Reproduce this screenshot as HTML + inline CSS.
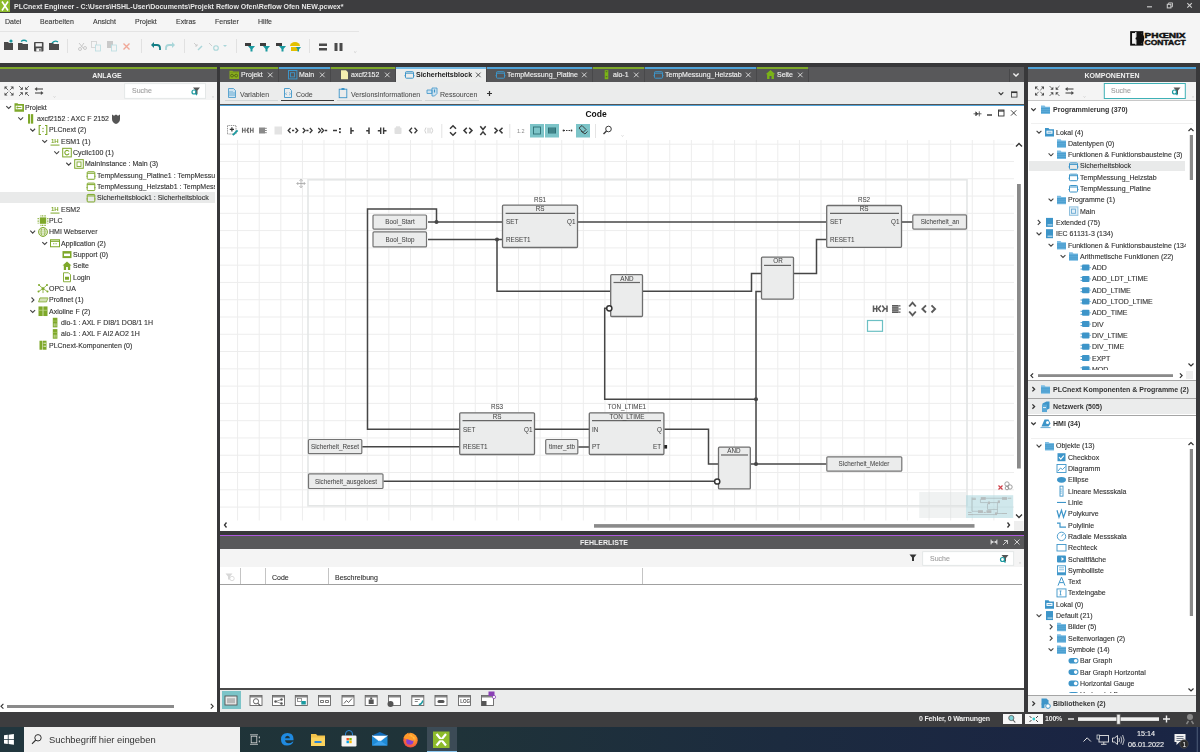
<!DOCTYPE html>
<html><head><meta charset="utf-8"><title>PLCnext Engineer</title>
<style>
html,body{margin:0;padding:0;}
body{width:1200px;height:752px;overflow:hidden;position:relative;background:#38383a;font-family:"Liberation Sans", sans-serif;}
.r{position:absolute;}
.t{position:absolute;white-space:nowrap;line-height:20px;height:20px;font-family:"Liberation Sans", sans-serif;will-change:transform;}
svg.r{overflow:visible;}
</style></head><body>

<div class="r" style="left:0px;top:0px;width:1200px;height:12.7px;background:#3d3d3f;"></div>
<svg class="r" style="left:0px;top:0px;" width="10" height="12" viewBox="0 0 10 12"><rect width="10" height="12" fill="#8dbb2b"/><path d="M2 1.5 L8 10.5 M8 1.5 L2 10.5" stroke="#fff" stroke-width="1.6"/><rect x="0" y="5" width="10" height="2" fill="#fff" opacity="0"/></svg>
<div class="t" style="left:14px;top:-3.20px;font-weight:bold;font-size:7px;color:#e6e6e6;">PLCnext Engineer - C:\Users\HSHL-User\Documents\Projekt Reflow Ofen\Reflow Ofen NEW.pcwex*</div>
<svg class="r" style="left:1140px;top:0px;" width="60" height="12" viewBox="0 0 60 12"><path d="M7 6.8h5" stroke="#c8c8c8" stroke-width="1.2"/><rect x="27.3" y="4.3" width="3.6" height="3.6" fill="none" stroke="#c8c8c8" stroke-width="1.1"/><path d="M28.6 4.3v-1.4h3.9v3.9h-1.5" fill="none" stroke="#c8c8c8" stroke-width="0.9"/><path d="M47.3 3.2l4.5 4.5M51.8 3.2l-4.5 4.5" stroke="#d0d0d0" stroke-width="1.1"/></svg>
<div class="r" style="left:0px;top:12.7px;width:1200px;height:50.8px;background:#f5f5f5;"></div>
<div class="r" style="left:0px;top:30.5px;width:359px;height:1px;background:#e4e4e4;"></div>
<div class="t" style="left:4.5px;top:11.90px;font-weight:normal;font-size:7px;color:#3a3a3a;-webkit-text-stroke:0.12px #3a3a3a;">Datei</div>
<div class="t" style="left:40px;top:11.90px;font-weight:normal;font-size:7px;color:#3a3a3a;-webkit-text-stroke:0.12px #3a3a3a;">Bearbeiten</div>
<div class="t" style="left:93px;top:11.90px;font-weight:normal;font-size:7px;color:#3a3a3a;-webkit-text-stroke:0.12px #3a3a3a;">Ansicht</div>
<div class="t" style="left:135px;top:11.90px;font-weight:normal;font-size:7px;color:#3a3a3a;-webkit-text-stroke:0.12px #3a3a3a;">Projekt</div>
<div class="t" style="left:176px;top:11.90px;font-weight:normal;font-size:7px;color:#3a3a3a;-webkit-text-stroke:0.12px #3a3a3a;">Extras</div>
<div class="t" style="left:215px;top:11.90px;font-weight:normal;font-size:7px;color:#3a3a3a;-webkit-text-stroke:0.12px #3a3a3a;">Fenster</div>
<div class="t" style="left:258px;top:11.90px;font-weight:normal;font-size:7px;color:#3a3a3a;-webkit-text-stroke:0.12px #3a3a3a;">Hilfe</div>
<svg class="r" style="left:0px;top:0px;" width="400" height="62" viewBox="0 0 400 62"><path d="M4 42h4l1 1h4v7h-9z" fill="#4a4a4a"/><circle cx="11" cy="41" r="1.6" fill="#1a9aa0"/><path d="M18 43h4l1 1h5v6h-10z" fill="#4a4a4a"/><path d="M21 41.5q3-2.5 6 0" fill="none" stroke="#1a9aa0" stroke-width="1.3"/><rect x="34" y="42" width="9.5" height="9.5" rx="0.8" fill="#4a4a4a"/><rect x="35.6" y="43.2" width="6.3" height="3.3" fill="#f4f4f4"/><rect x="36.3" y="48.3" width="5" height="3.2" fill="#f4f4f4"/><rect x="39.3" y="48.9" width="1.3" height="2" fill="#4a4a4a"/><path d="M49 43h4l1 1h5v6h-10z" fill="#4a4a4a"/><path d="M52 43q3-3 6-1" fill="none" stroke="#1a9aa0" stroke-width="1.3"/><rect x="67" y="39" width="0.8" height="14" fill="#dcdcdc"/><path d="M79 43l5 6M84 43l-3 4" stroke="#c8c8c8" stroke-width="1"/><circle cx="80" cy="49" r="1.5" fill="none" stroke="#c8c8c8"/><circle cx="85" cy="48" r="1.5" fill="none" stroke="#c8c8c8"/><rect x="91.5" y="41.5" width="5" height="6" fill="none" stroke="#d0d0d0" stroke-width="0.8"/><rect x="95.5" y="45" width="5" height="6" fill="#f4f4f4" stroke="#b8dde0" stroke-width="0.8"/><rect x="107" y="41" width="6" height="7" fill="#c9c9c9"/><rect x="111.5" y="45" width="5" height="6" fill="#f4f4f4" stroke="#b8dde0" stroke-width="0.8"/><path d="M123.5 43.5l6 6M129.5 43.5l-6 6" stroke="#f0a898" stroke-width="1.4"/><rect x="141" y="39" width="0.8" height="14" fill="#dcdcdc"/><path d="M153 45h4q3 0 3 3v2" fill="none" stroke="#137f86" stroke-width="1.8"/><path d="M151 45l3-3v6z" fill="#137f86"/><path d="M173 45h-4q-3 0-3 3v2" fill="none" stroke="#a9d6d9" stroke-width="1.8"/><path d="M175 45l-3-3v6z" fill="#a9d6d9"/><rect x="184" y="39" width="0.8" height="14" fill="#dcdcdc"/><path d="M194 43l3 3M195 46h2v-2" stroke="#c4c4c4" stroke-width="0.8" fill="none"/><path d="M198 50l4-4" stroke="#a9d6d9" stroke-width="1.4"/><path d="M209 43l3 3" stroke="#c4c4c4" stroke-width="0.8"/><circle cx="216" cy="48" r="2.3" fill="none" stroke="#a9d6d9" stroke-width="1.1"/><path d="M223 45l2 2 2-2z" fill="#a9d6d9"/><rect x="236" y="39" width="0.8" height="14" fill="#dcdcdc"/><rect x="245" y="43" width="6" height="3" fill="#3d3d3d"/><path d="M248 46h7l-2.5 3v2.5h-2v-2.5z" fill="#1a9aa0"/><rect x="260" y="43" width="6" height="3" fill="#3d3d3d"/><path d="M263 46h7l-2.5 3v2.5h-2v-2.5z" fill="#1a9aa0"/><rect x="276" y="43" width="6" height="3" fill="#3d3d3d"/><path d="M279 46h7l-2.5 3v2.5h-2v-2.5z" fill="#1a9aa0"/><path d="M290 46a5 4 0 0 1 10 0z" fill="#e3c000"/><rect x="291" y="47" width="7" height="4" fill="#e3c000"/><path d="M296 47h5l-2 2.5v2h-1.5v-2z" fill="#1a9aa0"/><rect x="309" y="39" width="0.8" height="14" fill="#dcdcdc"/><rect x="319" y="43.5" width="8" height="2.5" fill="#4a4a4a"/><rect x="319" y="48" width="8" height="2.5" fill="#4a4a4a"/><rect x="334.5" y="43" width="3" height="8" fill="#4a4a4a"/><rect x="339.5" y="43" width="3" height="8" fill="#4a4a4a"/><path d="M354 51.5l1.2 1 1.2-1" stroke="#bbb" stroke-width="0.6" fill="none"/></svg>
<svg class="r" style="left:1130px;top:30px;" width="58" height="16" viewBox="0 0 58 16"><rect x="1.1" y="2.1" width="11.3" height="12.6" fill="none" stroke="#111" stroke-width="1.9"/><path d="M5.5 2.1h2.5a5 5 0 0 1 0 12.6h-2.5z" fill="#111"/><rect x="5.2" y="2" width="1.2" height="12.6" fill="#fff"/><circle cx="6.8" cy="8.4" r="1.2" fill="#111"/><text x="14.6" y="7.6" font-family="Liberation Sans" font-weight="bold" font-size="7.4" fill="#111" stroke="#111" stroke-width="0.45" textLength="41" lengthAdjust="spacingAndGlyphs">PHŒNIX</text><text x="14.6" y="14.5" font-family="Liberation Sans" font-weight="bold" font-size="7.4" fill="#111" stroke="#111" stroke-width="0.45" textLength="41" lengthAdjust="spacingAndGlyphs">CONTACT</text></svg>
<div class="r" style="left:0px;top:67px;width:217px;height:2px;background:#7fa82a;"></div>
<div class="r" style="left:0px;top:69px;width:217px;height:13px;background:#58585a;"></div>
<div class="t" style="left:-93.5px;width:400px;text-align:center;top:65.80px;font-weight:bold;font-size:7px;color:#f0f0f0;">ANLAGE</div>
<div class="r" style="left:0px;top:82px;width:217px;height:18px;background:#f4f4f4;"></div>
<svg class="r" style="left:0px;top:82px;" width="217" height="18" viewBox="0 0 217 18"><path d="M4.5 4.5h3l-3 3z" fill="#4a4a4a"/><path d="M5.5 5.5L8.2 8.2" stroke="#4a4a4a" stroke-width="0.8"/><path d="M4.5 13.5h3l-3 -3z" fill="#4a4a4a"/><path d="M5.5 12.5L8.2 9.8" stroke="#4a4a4a" stroke-width="0.8"/><path d="M13.5 4.5h-3l3 3z" fill="#4a4a4a"/><path d="M12.5 5.5L9.8 8.2" stroke="#4a4a4a" stroke-width="0.8"/><path d="M13.5 13.5h-3l3 -3z" fill="#4a4a4a"/><path d="M12.5 12.5L9.8 9.8" stroke="#4a4a4a" stroke-width="0.8"/><path d="M22.8 7.8h-3l3 -3z" fill="#4a4a4a"/><path d="M21.8 6.8L19 4" stroke="#4a4a4a" stroke-width="0.8"/><path d="M22.8 10.2h-3l3 3z" fill="#4a4a4a"/><path d="M21.8 11.2L19 14" stroke="#4a4a4a" stroke-width="0.8"/><path d="M25.2 7.8h3l-3 -3z" fill="#4a4a4a"/><path d="M26.2 6.8L29 4" stroke="#4a4a4a" stroke-width="0.8"/><path d="M25.2 10.2h3l-3 3z" fill="#4a4a4a"/><path d="M26.2 11.2L29 14" stroke="#4a4a4a" stroke-width="0.8"/><path d="M34.5 7l2.6-2v4z" fill="#4a4a4a"/><path d="M36.5 7h6.5" stroke="#4a4a4a" stroke-width="1.1"/><path d="M43.5 11l-2.6-2v4z" fill="#4a4a4a"/><path d="M41.5 11h-6.5" stroke="#4a4a4a" stroke-width="1.1"/><rect x="124.7" y="1.7" width="80.9" height="14.6" fill="#fff" stroke="#dfe3e3" stroke-width="0.8"/><path d="M193 5.5h7l-2.5 3v3.5h-2v-3.5z" fill="#555"/><circle cx="194" cy="10" r="2" fill="none" stroke="#1a9aa0" stroke-width="1.2"/><path d="M195.4 11.4l1.6 1.6" stroke="#1a9aa0" stroke-width="1.3"/><path d="M53.5 14.5l1 .8 1-.8" stroke="#bbb" stroke-width="0.6" fill="none"/><path d="M212 14.5l1 .8 1-.8" stroke="#bbb" stroke-width="0.6" fill="none"/></svg>
<div class="t" style="left:131.5px;top:81.10px;font-weight:normal;font-size:7px;color:#a0a0a0;-webkit-text-stroke:0.12px #a0a0a0;">Suche</div>
<div class="r" style="left:0px;top:100px;width:217px;height:612px;background:#ffffff;"></div>
<div class="r" style="left:0px;top:191.5px;width:215px;height:11.5px;background:#e9eaea;"></div>
<div class="t" style="left:25px;top:97.80px;font-weight:normal;font-size:7px;color:#333;max-width:190px;overflow:hidden;-webkit-text-stroke:0.12px #333;">Projekt</div>
<div class="t" style="left:37px;top:109.13px;font-weight:normal;font-size:7px;color:#333;max-width:178px;overflow:hidden;-webkit-text-stroke:0.12px #333;">axcf2152 : AXC F 2152</div>
<div class="t" style="left:49px;top:120.46px;font-weight:normal;font-size:7px;color:#333;max-width:166px;overflow:hidden;-webkit-text-stroke:0.12px #333;">PLCnext (2)</div>
<div class="t" style="left:61px;top:131.79px;font-weight:normal;font-size:7px;color:#333;max-width:154px;overflow:hidden;-webkit-text-stroke:0.12px #333;">ESM1 (1)</div>
<div class="t" style="left:73px;top:143.12px;font-weight:normal;font-size:7px;color:#333;max-width:142px;overflow:hidden;-webkit-text-stroke:0.12px #333;">Cyclic100 (1)</div>
<div class="t" style="left:85px;top:154.45px;font-weight:normal;font-size:7px;color:#333;max-width:130px;overflow:hidden;-webkit-text-stroke:0.12px #333;">MainInstance : Main (3)</div>
<div class="t" style="left:97px;top:165.78px;font-weight:normal;font-size:7px;color:#333;max-width:118px;overflow:hidden;-webkit-text-stroke:0.12px #333;">TempMessung_Platine1 : TempMessung_Platine</div>
<div class="t" style="left:97px;top:177.11px;font-weight:normal;font-size:7px;color:#333;max-width:118px;overflow:hidden;-webkit-text-stroke:0.12px #333;">TempMessung_Heizstab1 : TempMessung_Heizstab</div>
<div class="t" style="left:97px;top:188.44px;font-weight:normal;font-size:7px;color:#333;max-width:118px;overflow:hidden;-webkit-text-stroke:0.12px #333;">Sicherheitsblock1 : Sicherheitsblock</div>
<div class="t" style="left:61px;top:199.77px;font-weight:normal;font-size:7px;color:#333;max-width:154px;overflow:hidden;-webkit-text-stroke:0.12px #333;">ESM2</div>
<div class="t" style="left:49px;top:211.10px;font-weight:normal;font-size:7px;color:#333;max-width:166px;overflow:hidden;-webkit-text-stroke:0.12px #333;">PLC</div>
<div class="t" style="left:49px;top:222.43px;font-weight:normal;font-size:7px;color:#333;max-width:166px;overflow:hidden;-webkit-text-stroke:0.12px #333;">HMI Webserver</div>
<div class="t" style="left:61px;top:233.76px;font-weight:normal;font-size:7px;color:#333;max-width:154px;overflow:hidden;-webkit-text-stroke:0.12px #333;">Application (2)</div>
<div class="t" style="left:73px;top:245.09px;font-weight:normal;font-size:7px;color:#333;max-width:142px;overflow:hidden;-webkit-text-stroke:0.12px #333;">Support (0)</div>
<div class="t" style="left:73px;top:256.42px;font-weight:normal;font-size:7px;color:#333;max-width:142px;overflow:hidden;-webkit-text-stroke:0.12px #333;">Seite</div>
<div class="t" style="left:73px;top:267.75px;font-weight:normal;font-size:7px;color:#333;max-width:142px;overflow:hidden;-webkit-text-stroke:0.12px #333;">Login</div>
<div class="t" style="left:49px;top:279.08px;font-weight:normal;font-size:7px;color:#333;max-width:166px;overflow:hidden;-webkit-text-stroke:0.12px #333;">OPC UA</div>
<div class="t" style="left:49px;top:290.41px;font-weight:normal;font-size:7px;color:#333;max-width:166px;overflow:hidden;-webkit-text-stroke:0.12px #333;">Profinet (1)</div>
<div class="t" style="left:49px;top:301.74px;font-weight:normal;font-size:7px;color:#333;max-width:166px;overflow:hidden;-webkit-text-stroke:0.12px #333;">Axioline F (2)</div>
<div class="t" style="left:61px;top:313.07px;font-weight:normal;font-size:7px;color:#333;max-width:154px;overflow:hidden;-webkit-text-stroke:0.12px #333;">dio-1 : AXL F DI8/1 DO8/1 1H</div>
<div class="t" style="left:61px;top:324.40px;font-weight:normal;font-size:7px;color:#333;max-width:154px;overflow:hidden;-webkit-text-stroke:0.12px #333;">aio-1 : AXL F AI2 AO2 1H</div>
<div class="t" style="left:49px;top:335.73px;font-weight:normal;font-size:7px;color:#333;max-width:166px;overflow:hidden;-webkit-text-stroke:0.12px #333;">PLCnext-Komponenten (0)</div>
<svg class="r" style="left:0px;top:0px;" width="217" height="712" viewBox="0 0 217 712"><path d="M6.299999999999999 106.1l2.4 2.4l2.4 -2.4" fill="none" stroke="#444" stroke-width="1.1"/><path d="M14.5 103.3h3l.8 .8h5.7v7.6h-9.5z" fill="#7ea82a"/><rect x="15.7" y="105.7" width="6.6" height="3.6" fill="#fff"/><circle cx="17.4" cy="107.5" r="1" fill="#7ea82a"/><path d="M18 107.5h3.4" stroke="#7ea82a" stroke-width="0.9"/><path d="M18.3 117.42999999999999l2.4 2.4l2.4 -2.4" fill="none" stroke="#444" stroke-width="1.1"/><rect x="28" y="114.13" width="2.2" height="9.5" fill="#7ea82a"/><rect x="31" y="114.13" width="2.2" height="9.5" fill="#7ea82a"/><path d="M30.300000000000004 128.76000000000002l2.4 2.4l2.4 -2.4" fill="none" stroke="#444" stroke-width="1.1"/><path d="M41 125.46000000000001h-1.8v9h1.8M45 125.46000000000001h1.8v9h-1.8" fill="none" stroke="#7ea82a" stroke-width="1.1"/><circle cx="43" cy="128.46" r="0.7" fill="#7ea82a"/><circle cx="43" cy="131.46" r="0.7" fill="#7ea82a"/><path d="M42.300000000000004 140.09l2.4 2.4l2.4 -2.4" fill="none" stroke="#444" stroke-width="1.1"/><text x="51" y="143.29" font-family="Liberation Sans" font-size="6" font-weight="bold" fill="#7ea82a">1H</text><path d="M50.5 145.09h9" stroke="#7ea82a" stroke-width="1"/><path d="M54.300000000000004 151.42000000000002l2.4 2.4l2.4 -2.4" fill="none" stroke="#444" stroke-width="1.1"/><rect x="62.7" y="148.32" width="8.6" height="8.6" fill="none" stroke="#7ea82a" stroke-width="1"/><path d="M69 151.62a2.2 2.2 0 1 0 0 2" fill="none" stroke="#7ea82a" stroke-width="1.1"/><path d="M66.3 162.75l2.4 2.4l2.4 -2.4" fill="none" stroke="#444" stroke-width="1.1"/><rect x="74.7" y="159.64999999999998" width="8.6" height="8.6" fill="none" stroke="#7ea82a" stroke-width="1"/><rect x="77" y="161.95" width="4" height="4.5" fill="none" stroke="#7ea82a" stroke-width="0.9"/><rect x="87.2" y="171.78" width="7.6" height="7.5" rx="0.8" fill="none" stroke="#7ea82a" stroke-width="1"/><path d="M87.2 173.28h7.6" stroke="#7ea82a" stroke-width="1"/><path d="M86.5 176.28h1M94.5 176.28h1" stroke="#7ea82a" stroke-width="1"/><rect x="87.2" y="183.11" width="7.6" height="7.5" rx="0.8" fill="none" stroke="#7ea82a" stroke-width="1"/><path d="M87.2 184.61h7.6" stroke="#7ea82a" stroke-width="1"/><path d="M86.5 187.61h1M94.5 187.61h1" stroke="#7ea82a" stroke-width="1"/><rect x="87.2" y="194.44" width="7.6" height="7.5" rx="0.8" fill="none" stroke="#7ea82a" stroke-width="1"/><path d="M87.2 195.94h7.6" stroke="#7ea82a" stroke-width="1"/><path d="M86.5 198.94h1M94.5 198.94h1" stroke="#7ea82a" stroke-width="1"/><text x="51" y="211.26999999999998" font-family="Liberation Sans" font-size="6" font-weight="bold" fill="#7ea82a">1H</text><path d="M50.5 213.07h9" stroke="#7ea82a" stroke-width="1"/><rect x="39.8" y="217.4" width="6.4" height="6.4" fill="#7ea82a"/><path d="M38.2 218.1v5.5M47.8 218.1v5.5M40.5 215.79999999999998h5.5M40.5 225.4h5.5" stroke="#7ea82a" stroke-width="1.2" stroke-dasharray="0.9 0.7"/><path d="M30.300000000000004 230.73000000000002l2.4 2.4l2.4 -2.4" fill="none" stroke="#444" stroke-width="1.1"/><circle cx="43" cy="231.93" r="4.5" fill="none" stroke="#7ea82a" stroke-width="0.9"/><ellipse cx="43" cy="231.93" rx="2" ry="4.5" fill="none" stroke="#7ea82a" stroke-width="0.7"/><path d="M38.5 231.93h9M39 229.93h8M39 233.93h8" stroke="#7ea82a" stroke-width="0.6"/><path d="M42.300000000000004 242.06l2.4 2.4l2.4 -2.4" fill="none" stroke="#444" stroke-width="1.1"/><rect x="50.5" y="239.76" width="9" height="7" fill="none" stroke="#7ea82a" stroke-width="1"/><path d="M50.5 241.26h9" stroke="#7ea82a" stroke-width="1.2"/><path d="M53 243.76h4" stroke="#7ea82a" stroke-width="0.8" stroke-dasharray="1 0.6"/><rect x="62.5" y="251.08999999999997" width="9" height="7" fill="#7ea82a"/><rect x="64" y="253.58999999999997" width="6" height="2.5" fill="#fff"/><path d="M67 261.42l4.5 4h-1.3v4.5h-2.3v-3h-1.8v3h-2.3v-4.5h-1.3z" fill="#7ea82a"/><path d="M63.5 272.75h5l2 2v7h-7z" fill="none" stroke="#7ea82a" stroke-width="0.9"/><rect x="65" y="276.75" width="4" height="3" fill="#7ea82a"/><circle cx="43" cy="288.58" r="1.4" fill="#7ea82a"/><path d="M43 288.58l-4 -3.5M43 288.58l4 -3.5M43 288.58l-4.5 3M43 288.58l4.5 3M43 288.58v4.5" stroke="#7ea82a" stroke-width="0.8"/><circle cx="39" cy="285.08" r="1" fill="#7ea82a"/><circle cx="47" cy="285.08" r="1" fill="#7ea82a"/><circle cx="38.5" cy="291.58" r="1" fill="#7ea82a"/><circle cx="47.5" cy="291.58" r="1" fill="#7ea82a"/><path d="M31.500000000000004 297.51000000000005l2.4 2.4l-2.4 2.4" fill="none" stroke="#444" stroke-width="1.1"/><path d="M38.5 301.91l1.5 -4h8l-1.5 4z" fill="none" stroke="#7ea82a" stroke-width="0.8"/><path d="M40 297.91v4M42 297.91v4M44 297.91v4M46 297.91v4" stroke="#7ea82a" stroke-width="0.7"/><path d="M30.300000000000004 310.04l2.4 2.4l2.4 -2.4" fill="none" stroke="#444" stroke-width="1.1"/><rect x="38.5" y="306.44" width="4.2" height="9.6" fill="#7ea82a"/><rect x="43.3" y="306.44" width="4.2" height="9.6" fill="#7ea82a"/><path d="M38.5 310.24h9" stroke="#c5dc8c" stroke-width="0.7"/><rect x="52.8" y="317.77" width="4.6" height="9.6" fill="#7ea82a"/><path d="M54.2 323.37v3M56 323.37v3" stroke="#fff" stroke-width="0.6"/><path d="M52.8 321.07h4.6" stroke="#b8d27a" stroke-width="0.6"/><rect x="52.8" y="329.09999999999997" width="4.6" height="9.6" fill="#7ea82a"/><path d="M54.2 334.7v3M56 334.7v3" stroke="#fff" stroke-width="0.6"/><path d="M52.8 332.4h4.6" stroke="#b8d27a" stroke-width="0.6"/><rect x="39.5" y="340.73" width="3" height="9" fill="#7ea82a"/><rect x="43" y="340.73" width="3.5" height="9" fill="#7ea82a"/><path d="M43.5 343.23h2.5M43.5 346.23h2.5" stroke="#fff" stroke-width="0.8"/><path d="M112 114.5l2 1.2 2-1.2 2 1.2 2-1.2v4.5q0 3.5-4 5q-4-1.5-4-5z" fill="#555"/></svg>
<div class="r" style="left:0px;top:700px;width:217px;height:12px;background:#ffffff;"></div>
<div class="r" style="left:7px;top:705px;width:167px;height:2.8px;background:#8a8a8a;"></div>
<svg class="r" style="left:0px;top:700px;" width="217" height="12" viewBox="0 0 217 12"><path d="M3.4000000000000004 3.9l-2.4 2.4l2.4 2.4" fill="none" stroke="#333" stroke-width="1.1"/><path d="M210.8 3.9l2.4 2.4l-2.4 2.4" fill="none" stroke="#333" stroke-width="1.1"/></svg>
<div class="r" style="left:220px;top:67px;width:804px;height:15px;background:#58585a;"></div>
<div class="r" style="left:220px;top:67px;width:57.5px;height:15px;background:#555557;"></div>
<div class="r" style="left:220px;top:67px;width:57.5px;height:2px;background:#7fa82a;"></div>
<div class="t" style="left:240.5px;top:64.90px;font-weight:normal;font-size:7px;color:#f2f2f2;-webkit-text-stroke:0.12px #f2f2f2;">Projekt</div>
<div class="r" style="left:278.5px;top:67px;width:51.0px;height:15px;background:#555557;"></div>
<div class="r" style="left:278.5px;top:67px;width:51.0px;height:2px;background:#4fa3d9;"></div>
<div class="t" style="left:299.0px;top:64.90px;font-weight:normal;font-size:7px;color:#f2f2f2;-webkit-text-stroke:0.12px #f2f2f2;">Main</div>
<div class="r" style="left:330.5px;top:67px;width:64.0px;height:15px;background:#555557;"></div>
<div class="r" style="left:330.5px;top:67px;width:64.0px;height:2px;background:#7fa82a;"></div>
<div class="t" style="left:351.0px;top:64.90px;font-weight:normal;font-size:7px;color:#f2f2f2;-webkit-text-stroke:0.12px #f2f2f2;">axcf2152</div>
<div class="r" style="left:395.5px;top:67px;width:90.0px;height:15px;background:#ecedec;"></div>
<div class="r" style="left:395.5px;top:67px;width:90.0px;height:2px;background:#74bbe6;"></div>
<div class="t" style="left:416.0px;top:64.90px;font-weight:bold;font-size:7px;color:#222;">Sicherheitsblock</div>
<div class="r" style="left:486.5px;top:67px;width:105.0px;height:15px;background:#555557;"></div>
<div class="r" style="left:486.5px;top:67px;width:105.0px;height:2px;background:#4fa3d9;"></div>
<div class="t" style="left:507.0px;top:64.90px;font-weight:normal;font-size:7px;color:#f2f2f2;-webkit-text-stroke:0.12px #f2f2f2;">TempMessung_Platine</div>
<div class="r" style="left:592.5px;top:67px;width:51.0px;height:15px;background:#555557;"></div>
<div class="r" style="left:592.5px;top:67px;width:51.0px;height:2px;background:#7fa82a;"></div>
<div class="t" style="left:613.0px;top:64.90px;font-weight:normal;font-size:7px;color:#f2f2f2;-webkit-text-stroke:0.12px #f2f2f2;">aio-1</div>
<div class="r" style="left:644.5px;top:67px;width:111.0px;height:15px;background:#555557;"></div>
<div class="r" style="left:644.5px;top:67px;width:111.0px;height:2px;background:#4fa3d9;"></div>
<div class="t" style="left:665.0px;top:64.90px;font-weight:normal;font-size:7px;color:#f2f2f2;-webkit-text-stroke:0.12px #f2f2f2;">TempMessung_Heizstab</div>
<div class="r" style="left:756.5px;top:67px;width:51.0px;height:15px;background:#555557;"></div>
<div class="r" style="left:756.5px;top:67px;width:51.0px;height:2px;background:#7fa82a;"></div>
<div class="t" style="left:777.0px;top:64.90px;font-weight:normal;font-size:7px;color:#f2f2f2;-webkit-text-stroke:0.12px #f2f2f2;">Seite</div>
<div class="r" style="left:277.5px;top:69px;width:1px;height:13px;background:#48484a;"></div>
<div class="r" style="left:329.5px;top:69px;width:1px;height:13px;background:#48484a;"></div>
<div class="r" style="left:394.5px;top:69px;width:1px;height:13px;background:#48484a;"></div>
<div class="r" style="left:485.5px;top:69px;width:1px;height:13px;background:#48484a;"></div>
<div class="r" style="left:591.5px;top:69px;width:1px;height:13px;background:#48484a;"></div>
<div class="r" style="left:643.5px;top:69px;width:1px;height:13px;background:#48484a;"></div>
<div class="r" style="left:755.5px;top:69px;width:1px;height:13px;background:#48484a;"></div>
<div class="r" style="left:807.5px;top:69px;width:1px;height:13px;background:#48484a;"></div>
<div class="r" style="left:1008.5px;top:69px;width:1px;height:13px;background:#48484a;"></div>
<svg class="r" style="left:0px;top:0px;" width="1200" height="90" viewBox="0 0 1200 90"><path d="M229.5 70.7h3l.8 .8h5.7v7.6h-9.5z" fill="#8aae1e"/><path d="M230.2 72.3h8" stroke="#5f7a10" stroke-width="0.4"/><circle cx="232" cy="75.60000000000001" r="1.4" fill="none" stroke="#4d5f14" stroke-width="0.8"/><circle cx="236.2" cy="75.60000000000001" r="1.4" fill="none" stroke="#4d5f14" stroke-width="0.8"/><path d="M233.4 75.60000000000001h1.4" stroke="#4d5f14" stroke-width="0.8"/><path d="M268.0 72.6l4.6 4.6M272.6 72.6l-4.6 4.6" stroke="#e0e0e0" stroke-width="0.9"/><rect x="288.5" y="70.5" width="8.4" height="8.4" fill="none" stroke="#3d95c9" stroke-width="1"/><rect x="290.5" y="72.7" width="4" height="4.2" fill="none" stroke="#3d95c9" stroke-width="0.9"/><path d="M320.0 72.6l4.6 4.6M324.6 72.6l-4.6 4.6" stroke="#e0e0e0" stroke-width="0.9"/><path d="M341.0 70.2h5l2 2v7h-7z" fill="#f6f0b0"/><path d="M385.0 72.6l4.6 4.6M389.6 72.6l-4.6 4.6" stroke="#e0e0e0" stroke-width="0.9"/><rect x="405.5" y="71.7" width="8" height="6.5" rx="0.8" fill="none" stroke="#3d95c9" stroke-width="1"/><path d="M405.5 73.2h8" stroke="#3d95c9" stroke-width="1"/><path d="M404.5 75.7h1.5M413.0 75.7h1.5" stroke="#3d95c9" stroke-width="1"/><path d="M476.0 72.6l4.6 4.6M480.6 72.6l-4.6 4.6" stroke="#444" stroke-width="0.9"/><rect x="496.5" y="71.7" width="8" height="6.5" rx="0.8" fill="none" stroke="#3d95c9" stroke-width="1"/><path d="M496.5 73.2h8" stroke="#3d95c9" stroke-width="1"/><path d="M495.5 75.7h1.5M504.0 75.7h1.5" stroke="#3d95c9" stroke-width="1"/><path d="M582.0 72.6l4.6 4.6M586.6 72.6l-4.6 4.6" stroke="#e0e0e0" stroke-width="0.9"/><rect x="604.7" y="70.2" width="3.6" height="9" fill="#7ab317"/><path d="M605.7 71.7h1.6M605.7 76.7h1.6" stroke="#333" stroke-width="0.6"/><path d="M634.0 72.6l4.6 4.6M638.6 72.6l-4.6 4.6" stroke="#e0e0e0" stroke-width="0.9"/><rect x="654.5" y="71.7" width="8" height="6.5" rx="0.8" fill="none" stroke="#3d95c9" stroke-width="1"/><path d="M654.5 73.2h8" stroke="#3d95c9" stroke-width="1"/><path d="M653.5 75.7h1.5M662.0 75.7h1.5" stroke="#3d95c9" stroke-width="1"/><path d="M746.0 72.6l4.6 4.6M750.6 72.6l-4.6 4.6" stroke="#e0e0e0" stroke-width="0.9"/><path d="M770.5 69.9l4.8 4.3h-1.4v4.7h-2.4v-3h-2v3h-2.4v-4.7h-1.4z" fill="#7ab317"/><path d="M798.0 72.6l4.6 4.6M802.6 72.6l-4.6 4.6" stroke="#e0e0e0" stroke-width="0.9"/><path d="M1013.4 73.5l2.6 2.6l2.6 -2.6" fill="none" stroke="#f2f2f2" stroke-width="1.4"/></svg>
<div class="r" style="left:220px;top:82px;width:804px;height:22px;background:#ebecec;"></div>
<div class="r" style="left:225px;top:100px;width:53px;height:1px;background:#d2d6d6;"></div>
<div class="t" style="left:240px;top:84.70px;font-weight:normal;font-size:7px;color:#4a4a4a;-webkit-text-stroke:0.05px #4a4a4a;">Variablen</div>
<div class="r" style="left:281px;top:100px;width:53px;height:1.4px;background:#3a3a3a;"></div>
<div class="t" style="left:296px;top:84.70px;font-weight:normal;font-size:7px;color:#4a4a4a;-webkit-text-stroke:0.05px #4a4a4a;">Code</div>
<div class="r" style="left:337px;top:100px;width:85px;height:1px;background:#d2d6d6;"></div>
<div class="t" style="left:351px;top:84.70px;font-weight:normal;font-size:7px;color:#4a4a4a;-webkit-text-stroke:0.05px #4a4a4a;">Versionsinformationen</div>
<div class="r" style="left:425px;top:100px;width:54px;height:1px;background:#d2d6d6;"></div>
<div class="t" style="left:440px;top:84.70px;font-weight:normal;font-size:7px;color:#4a4a4a;-webkit-text-stroke:0.05px #4a4a4a;">Ressourcen</div>
<svg class="r" style="left:0px;top:0px;" width="1200" height="110" viewBox="0 0 1200 110"><path d="M228.5 88.5h5l2 2v7h-7z" fill="#cfe3f0" stroke="#3d95c9" stroke-width="0.8"/><path d="M230 91v5M232 91v5M234 92v4" stroke="#3d95c9" stroke-width="0.7"/><path d="M284.5 88.5h5l2 2v7h-7z" fill="none" stroke="#3d95c9" stroke-width="0.9"/><path d="M286.8 92.5l-1.3 1.3 1.3 1.3M289.2 92.5l1.3 1.3-1.3 1.3" fill="none" stroke="#3d95c9" stroke-width="0.7"/><rect x="339.2" y="89.2" width="7.6" height="8.5" fill="none" stroke="#3d95c9" stroke-width="0.9"/><rect x="341.5" y="88" width="3" height="2" fill="#3d95c9"/><path d="M427 90h5v3.5h-5z M432 88h5v5.5l-2.5 2.5h-2.5z" fill="#cfe3f0" stroke="#3d95c9" stroke-width="0.8"/><path d="M434.5 89.5v3" stroke="#3d95c9" stroke-width="1.2"/><path d="M487 93.5h5M489.5 91v5" stroke="#333" stroke-width="1.2"/><path d="M998.7 92.44999999999999l2.3 2.3l2.3 -2.3" fill="none" stroke="#333" stroke-width="1.2"/><rect x="1011.4" y="91.8" width="5.6" height="5.3" fill="none" stroke="#333" stroke-width="0.8"/><path d="M1011.4 92.5h5.6" stroke="#333" stroke-width="1.1"/></svg>
<div class="r" style="left:220px;top:103.6px;width:804px;height:1px;background:#555;"></div>
<div class="r" style="left:220px;top:104.5px;width:804px;height:1.6px;background:#4fa3d9;"></div>
<div class="r" style="left:220px;top:106px;width:804px;height:425px;background:#ffffff;"></div>
<div class="t" style="left:395.5px;width:400px;text-align:center;top:103.51px;font-weight:bold;font-size:8.5px;color:#111;">Code</div>
<svg class="r" style="left:960px;top:106px;" width="64" height="14" viewBox="0 0 64 14"><path d="M13.5 7.8h8M19.3 5.3v5M17.8 7.8l-2-2v4z" stroke="#444" stroke-width="0.8" fill="#444"/><path d="M27 9h5" stroke="#333" stroke-width="1.4"/><rect x="38.5" y="4" width="5.5" height="6" fill="none" stroke="#333" stroke-width="0.9"/><path d="M38.5 5h5.5" stroke="#333" stroke-width="1.2"/><path d="M51 4.3l5.3 5.3M56.3 4.3l-5.3 5.3" stroke="#333" stroke-width="0.9"/></svg>
<svg class="r" style="left:0px;top:0px;" width="1200" height="140" viewBox="0 0 1200 140"><rect x="227.5" y="125.5" width="8.5" height="8.5" fill="none" stroke="#555" stroke-width="0.7" stroke-dasharray="1 0.8"/><path d="M229.8 129.3h4.2M231.9 127.2v4.2" fill="none" stroke="#333" stroke-width="1.2"/><path d="M232.8 135.2l4.8-4.8" fill="none" stroke="#1a9aa0" stroke-width="1.8"/><path d="M242.5 127.8v5M242.5 130.3h2.6M245.1 127.8v5" fill="none" stroke="#666" stroke-width="1.1"/><path d="M249 127.8l-2.2 2.5 2.2 2.5M247.8 127.8v5" fill="none" stroke="#666" stroke-width="1.1"/><path d="M250.5 127.8v5M250.5 130.3h2.6M253.1 127.8v5" fill="none" stroke="#666" stroke-width="1.1"/><rect x="259" y="127.5" width="6" height="6" fill="#8a8a8a"/><path d="M265 128.3h1.8M265 130.5h1.8M265 132.7h1.8" fill="none" stroke="#8a8a8a" stroke-width="1"/><rect x="274.5" y="126.5" width="7.5" height="8" fill="#e3e3e3"/><path d="M290.5 128l-2.3 2.5 2.3 2.5M292 130.5h2.2M295.5 128l2.3 2.5-2.3 2.5" fill="none" stroke="#3a3a3a" stroke-width="1.3"/><path d="M302.8 128l2.3 2.5-2.3 2.5M306.3 130.5h2.2M309.8 128l2.3 2.5-2.3 2.5" fill="none" stroke="#3a3a3a" stroke-width="1.3"/><path d="M318.3 128l2.3 2.5-2.3 2.5M321.3 128l2.3 2.5-2.3 2.5M324.8 130.5h2.4" fill="none" stroke="#3a3a3a" stroke-width="1.3"/><path d="M333 130.5h4" fill="none" stroke="#3a3a3a" stroke-width="1.5"/><rect x="339" y="128" width="1.8" height="1.8" fill="#3a3a3a"/><rect x="339" y="131.3" width="1.8" height="1.8" fill="#3a3a3a"/><path d="M351 127.5v6.5M351 130.8h2.8" fill="none" stroke="#3a3a3a" stroke-width="1.5"/><path d="M369 127.5v6.5M369 130.8h-2.8" fill="none" stroke="#3a3a3a" stroke-width="1.5"/><path d="M377.8 130.8h2.4M380.7 127.5v6.5M383.6 127.5v6.5M384.1 130.8h2.4" fill="none" stroke="#3a3a3a" stroke-width="1.4"/><rect x="394.5" y="127.5" width="7" height="6.5" rx="1" fill="#e0e0e0"/><rect x="396" y="126.3" width="4" height="2" fill="#e0e0e0"/><path d="M412 127.8l-2.5 2.7 2.5 2.7M414.5 127.8l2.5 2.7-2.5 2.7" fill="none" stroke="#3a3a3a" stroke-width="1.3"/><path d="M426 127.5l-1.2 3 1.2 3M431.5 127.5l1.2 3-1.2 3M428 127.8v5.5M430 127.8v5.5" fill="none" stroke="#d0d0d0" stroke-width="1"/><rect x="441.5" y="124" width="0.7" height="14" fill="#d8d8d8"/><path d="M450 128.8l3-3 3 3M450 132.2l3 3 3-3" fill="none" stroke="#3a3a3a" stroke-width="1.5"/><path d="M466.8 127.8l-2.8 2.8 2.8 2.8M469.2 127.8l2.8 2.8-2.8 2.8" fill="none" stroke="#3a3a3a" stroke-width="1.5"/><path d="M480.3 126.3l2.7 3.2 2.7-3.2M480.3 135l2.7-3.2 2.7 3.2" fill="none" stroke="#3a3a3a" stroke-width="1.5"/><path d="M494.5 127.8l2.8 2.8-2.8 2.8M502.5 127.8l-2.8 2.8 2.8 2.8" fill="none" stroke="#3a3a3a" stroke-width="1.5"/><rect x="509.5" y="124" width="0.7" height="14" fill="#d8d8d8"/><text x="517" y="132.8" font-family="Liberation Sans" font-size="5.5" fill="#888">1.2</text><rect x="530" y="124" width="14" height="13.5" fill="#7cc4c8"/><rect x="533.5" y="127" width="7" height="7" fill="none" stroke="#2d6f74" stroke-width="0.9"/><rect x="545" y="124" width="14" height="13.5" fill="#7cc4c8"/><rect x="548" y="127.5" width="8" height="6" fill="#2d6f74"/><path d="M550 127.5v6M552 127.5v6M554 127.5v6" stroke="#7cc4c8" stroke-width="0.5"/><path d="M563.5 130.5h8" stroke="#3a3a3a" stroke-width="1" stroke-dasharray="1.5 1"/><circle cx="563.5" cy="130.5" r="0.9" fill="#3a3a3a"/><circle cx="571.5" cy="130.5" r="0.9" fill="#3a3a3a"/><rect x="576" y="124" width="14" height="13.5" fill="#7cc4c8"/><path d="M579 128l3-2.5 4 4-3 3zM581 131l4 3 2.5-2.5" fill="none" stroke="#333" stroke-width="0.9"/><rect x="595" y="124" width="0.7" height="14" fill="#d8d8d8"/><circle cx="608.5" cy="129" r="2.8" fill="none" stroke="#3a3a3a" stroke-width="1"/><path d="M606.5 131l-3 3" stroke="#3a3a3a" stroke-width="1.4"/><path d="M621.5 135.5l1 .8 1-.8" stroke="#bbb" stroke-width="0.6" fill="none"/></svg>
<svg class="r" style="left:0px;top:0px;" width="1200" height="540" viewBox="0 0 1200 540"><path d="M237.60 140V520.5" stroke="#ededed" stroke-width="1"/><path d="M259.21 140V520.5" stroke="#ededed" stroke-width="1"/><path d="M280.82 140V520.5" stroke="#ededed" stroke-width="1"/><path d="M302.42 140V520.5" stroke="#ededed" stroke-width="1"/><path d="M324.03 140V520.5" stroke="#ededed" stroke-width="1"/><path d="M345.64 140V520.5" stroke="#ededed" stroke-width="1"/><path d="M367.25 140V520.5" stroke="#ededed" stroke-width="1"/><path d="M388.86 140V520.5" stroke="#ededed" stroke-width="1"/><path d="M410.46 140V520.5" stroke="#ededed" stroke-width="1"/><path d="M432.07 140V520.5" stroke="#ededed" stroke-width="1"/><path d="M453.68 140V520.5" stroke="#ededed" stroke-width="1"/><path d="M475.29 140V520.5" stroke="#ededed" stroke-width="1"/><path d="M496.90 140V520.5" stroke="#ededed" stroke-width="1"/><path d="M518.50 140V520.5" stroke="#ededed" stroke-width="1"/><path d="M540.11 140V520.5" stroke="#ededed" stroke-width="1"/><path d="M561.72 140V520.5" stroke="#ededed" stroke-width="1"/><path d="M583.33 140V520.5" stroke="#ededed" stroke-width="1"/><path d="M604.94 140V520.5" stroke="#ededed" stroke-width="1"/><path d="M626.54 140V520.5" stroke="#ededed" stroke-width="1"/><path d="M648.15 140V520.5" stroke="#ededed" stroke-width="1"/><path d="M669.76 140V520.5" stroke="#ededed" stroke-width="1"/><path d="M691.37 140V520.5" stroke="#ededed" stroke-width="1"/><path d="M712.98 140V520.5" stroke="#ededed" stroke-width="1"/><path d="M734.58 140V520.5" stroke="#ededed" stroke-width="1"/><path d="M756.19 140V520.5" stroke="#ededed" stroke-width="1"/><path d="M777.80 140V520.5" stroke="#ededed" stroke-width="1"/><path d="M799.41 140V520.5" stroke="#ededed" stroke-width="1"/><path d="M821.02 140V520.5" stroke="#ededed" stroke-width="1"/><path d="M842.62 140V520.5" stroke="#ededed" stroke-width="1"/><path d="M864.23 140V520.5" stroke="#ededed" stroke-width="1"/><path d="M885.84 140V520.5" stroke="#ededed" stroke-width="1"/><path d="M907.45 140V520.5" stroke="#ededed" stroke-width="1"/><path d="M929.06 140V520.5" stroke="#ededed" stroke-width="1"/><path d="M950.66 140V520.5" stroke="#ededed" stroke-width="1"/><path d="M972.27 140V520.5" stroke="#ededed" stroke-width="1"/><path d="M993.88 140V520.5" stroke="#ededed" stroke-width="1"/><path d="M220 144.20H1014" stroke="#ededed" stroke-width="1"/><path d="M220 161.48H1014" stroke="#ededed" stroke-width="1"/><path d="M220 178.76H1014" stroke="#ededed" stroke-width="1"/><path d="M220 196.04H1014" stroke="#ededed" stroke-width="1"/><path d="M220 213.32H1014" stroke="#ededed" stroke-width="1"/><path d="M220 230.60H1014" stroke="#ededed" stroke-width="1"/><path d="M220 247.88H1014" stroke="#ededed" stroke-width="1"/><path d="M220 265.16H1014" stroke="#ededed" stroke-width="1"/><path d="M220 282.44H1014" stroke="#ededed" stroke-width="1"/><path d="M220 299.72H1014" stroke="#ededed" stroke-width="1"/><path d="M220 317.00H1014" stroke="#ededed" stroke-width="1"/><path d="M220 334.28H1014" stroke="#ededed" stroke-width="1"/><path d="M220 351.56H1014" stroke="#ededed" stroke-width="1"/><path d="M220 368.84H1014" stroke="#ededed" stroke-width="1"/><path d="M220 386.12H1014" stroke="#ededed" stroke-width="1"/><path d="M220 403.40H1014" stroke="#ededed" stroke-width="1"/><path d="M220 420.68H1014" stroke="#ededed" stroke-width="1"/><path d="M220 437.96H1014" stroke="#ededed" stroke-width="1"/><path d="M220 455.24H1014" stroke="#ededed" stroke-width="1"/><path d="M220 472.52H1014" stroke="#ededed" stroke-width="1"/><path d="M220 489.80H1014" stroke="#ededed" stroke-width="1"/><path d="M220 507.08H1014" stroke="#ededed" stroke-width="1"/><rect x="308" y="179.8" width="659" height="326" stroke="#e4e6e6" stroke-width="1.6" fill="none"/><g stroke="#999" stroke-width="0.7" fill="none"><path d="M301 179.5v8M297 183.5h8"/><path d="M299.5 180.8l1.5-1.5 1.5 1.5M299.5 186.2l1.5 1.5 1.5-1.5M298.3 182l-1.5 1.5 1.5 1.5M303.7 182l1.5 1.5-1.5 1.5"/></g><path d="M428 222H502" fill="none" stroke="#464646" stroke-width="1.5" stroke-linejoin="miter"/><path d="M436.5 222V209H367.5V429.2H459" fill="none" stroke="#464646" stroke-width="1.5" stroke-linejoin="miter"/><path d="M428 239.5H502" fill="none" stroke="#464646" stroke-width="1.5" stroke-linejoin="miter"/><path d="M497 239.5V291.2H610" fill="none" stroke="#464646" stroke-width="1.5" stroke-linejoin="miter"/><path d="M578 222H826" fill="none" stroke="#464646" stroke-width="1.5" stroke-linejoin="miter"/><path d="M643 291.2H751.5V273.6H761" fill="none" stroke="#464646" stroke-width="1.5" stroke-linejoin="miter"/><path d="M756 464V291.5H761" fill="none" stroke="#464646" stroke-width="1.5" stroke-linejoin="miter"/><path d="M794 273.6H816.5V239.6H826" fill="none" stroke="#464646" stroke-width="1.5" stroke-linejoin="miter"/><path d="M902 222H912.3" fill="none" stroke="#464646" stroke-width="1.5" stroke-linejoin="miter"/><path d="M756 399.2H604.7V308.3H607" fill="none" stroke="#464646" stroke-width="1.5" stroke-linejoin="miter"/><path d="M362.3 446.7H459" fill="none" stroke="#464646" stroke-width="1.5" stroke-linejoin="miter"/><path d="M535 429.3H589" fill="none" stroke="#464646" stroke-width="1.5" stroke-linejoin="miter"/><path d="M578.3 447H589" fill="none" stroke="#464646" stroke-width="1.5" stroke-linejoin="miter"/><path d="M664.4 429.3H708.5V464H718" fill="none" stroke="#464646" stroke-width="1.5" stroke-linejoin="miter"/><path d="M383.5 481.3H714.5" fill="none" stroke="#464646" stroke-width="1.5" stroke-linejoin="miter"/><path d="M750.8 464H826.3" fill="none" stroke="#464646" stroke-width="1.5" stroke-linejoin="miter"/><circle cx="436.5" cy="222" r="2" fill="#464646"/><circle cx="497" cy="239.5" r="2" fill="#464646"/><circle cx="756" cy="399.2" r="2" fill="#464646"/><circle cx="756" cy="464" r="2" fill="#464646"/><rect x="663.5" y="445" width="3.6" height="3.6" fill="#222"/></svg>
<svg class="r" style="left:0px;top:0px;" width="1200" height="540" viewBox="0 0 1200 540"><rect x="373.0" y="215.0" width="53.5" height="14.099999999999994" rx="1" fill="#ebecec" stroke="#747474" stroke-width="1.2"/><rect x="373.0" y="231.9" width="53.5" height="15.0" rx="1" fill="#ebecec" stroke="#747474" stroke-width="1.2"/><rect x="912.8" y="214.9" width="53.700000000000045" height="14.199999999999989" rx="1" fill="#ebecec" stroke="#747474" stroke-width="1.2"/><rect x="308.4" y="439.5" width="53.400000000000034" height="14.199999999999989" rx="1" fill="#ebecec" stroke="#747474" stroke-width="1.2"/><rect x="308.5" y="473.8" width="74.5" height="14.699999999999989" rx="1" fill="#ebecec" stroke="#747474" stroke-width="1.2"/><rect x="545.7" y="439.5" width="32.09999999999991" height="14.399999999999977" rx="1" fill="#ebecec" stroke="#747474" stroke-width="1.2"/><rect x="826.8" y="456.8" width="75.0" height="14.399999999999977" rx="1" fill="#ebecec" stroke="#747474" stroke-width="1.2"/><rect x="502.5" y="205.1" width="75" height="42.400000000000006" rx="1" fill="#ebecec" stroke="#6e6e6e" stroke-width="1.3"/><path d="M505.6 213.4H575" stroke="#666" stroke-width="1.2"/><rect x="826.7" y="205.5" width="74.79999999999995" height="41.80000000000001" rx="1" fill="#ebecec" stroke="#6e6e6e" stroke-width="1.3"/><path d="M830 213.3H899" stroke="#666" stroke-width="1.2"/><rect x="459.7" y="412.8" width="74.80000000000001" height="41.69999999999999" rx="1" fill="#ebecec" stroke="#6e6e6e" stroke-width="1.3"/><path d="M462.5 420.6H532" stroke="#666" stroke-width="1.2"/><rect x="589.3" y="412.8" width="74.60000000000002" height="41.69999999999999" rx="1" fill="#ebecec" stroke="#6e6e6e" stroke-width="1.3"/><path d="M592 420.6H661" stroke="#666" stroke-width="1.2"/><rect x="610.7" y="274.7" width="31.799999999999955" height="41.80000000000001" rx="1" fill="#ebecec" stroke="#6e6e6e" stroke-width="1.3"/><path d="M613.5 282.5H640" stroke="#666" stroke-width="1.2"/><rect x="761.5" y="257.1" width="32" height="42.0" rx="1" fill="#ebecec" stroke="#6e6e6e" stroke-width="1.3"/><path d="M764 265.4H791" stroke="#666" stroke-width="1.2"/><rect x="718.5" y="447.2" width="31.799999999999955" height="41.69999999999999" rx="1" fill="#ebecec" stroke="#6e6e6e" stroke-width="1.3"/><path d="M721 455H748" stroke="#666" stroke-width="1.2"/><circle cx="609.3" cy="308.3" r="2.6" fill="#fff" stroke="#333" stroke-width="1.5"/><circle cx="717.2" cy="481.5" r="2.6" fill="#fff" stroke="#333" stroke-width="1.5"/></svg>
<div class="t" style="left:200px;width:400px;text-align:center;top:212.40px;font-weight:normal;font-size:6.3px;color:#484848;-webkit-text-stroke:0.05px #484848;">Bool_Start</div>
<div class="t" style="left:200px;width:400px;text-align:center;top:229.90px;font-weight:normal;font-size:6.3px;color:#484848;-webkit-text-stroke:0.05px #484848;">Bool_Stop</div>
<div class="t" style="left:739.7px;width:400px;text-align:center;top:212.40px;font-weight:normal;font-size:6.3px;color:#484848;-webkit-text-stroke:0.05px #484848;">Sicherheit_an</div>
<div class="t" style="left:135.10000000000002px;width:400px;text-align:center;top:437.10px;font-weight:normal;font-size:6.3px;color:#484848;-webkit-text-stroke:0.05px #484848;">Sicherheit_Reset</div>
<div class="t" style="left:145.8px;width:400px;text-align:center;top:471.60px;font-weight:normal;font-size:6.3px;color:#484848;-webkit-text-stroke:0.05px #484848;">Sicherheit_ausgeloest</div>
<div class="t" style="left:361.79999999999995px;width:400px;text-align:center;top:437.20px;font-weight:normal;font-size:6.3px;color:#484848;-webkit-text-stroke:0.05px #484848;">timer_stb</div>
<div class="t" style="left:664.3px;width:400px;text-align:center;top:454.40px;font-weight:normal;font-size:6.3px;color:#484848;-webkit-text-stroke:0.05px #484848;">Sicherheit_Melder</div>
<div class="t" style="left:340px;width:400px;text-align:center;top:189.70px;font-weight:normal;font-size:6.3px;color:#484848;-webkit-text-stroke:0.05px #484848;">RS1</div>
<div class="t" style="left:340px;width:400px;text-align:center;top:199.40px;font-weight:normal;font-size:6.3px;color:#484848;-webkit-text-stroke:0.05px #484848;">RS</div>
<div class="t" style="left:664px;width:400px;text-align:center;top:189.70px;font-weight:normal;font-size:6.3px;color:#484848;-webkit-text-stroke:0.05px #484848;">RS2</div>
<div class="t" style="left:664px;width:400px;text-align:center;top:199.40px;font-weight:normal;font-size:6.3px;color:#484848;-webkit-text-stroke:0.05px #484848;">RS</div>
<div class="t" style="left:297px;width:400px;text-align:center;top:397.10px;font-weight:normal;font-size:6.3px;color:#484848;-webkit-text-stroke:0.05px #484848;">RS3</div>
<div class="t" style="left:297px;width:400px;text-align:center;top:406.90px;font-weight:normal;font-size:6.3px;color:#484848;-webkit-text-stroke:0.05px #484848;">RS</div>
<div class="t" style="left:426.5px;width:400px;text-align:center;top:397.10px;font-weight:normal;font-size:6.3px;color:#484848;-webkit-text-stroke:0.05px #484848;">TON_LTIME1</div>
<div class="t" style="left:426.5px;width:400px;text-align:center;top:406.90px;font-weight:normal;font-size:6.3px;color:#484848;-webkit-text-stroke:0.05px #484848;">TON_LTIME</div>
<div class="t" style="left:426.6px;width:400px;text-align:center;top:268.60px;font-weight:normal;font-size:6.3px;color:#484848;-webkit-text-stroke:0.05px #484848;">AND</div>
<div class="t" style="left:577.5px;width:400px;text-align:center;top:251.40px;font-weight:normal;font-size:6.3px;color:#484848;-webkit-text-stroke:0.05px #484848;">OR</div>
<div class="t" style="left:534.4px;width:400px;text-align:center;top:441.40px;font-weight:normal;font-size:6.3px;color:#484848;-webkit-text-stroke:0.05px #484848;">AND</div>
<div class="t" style="left:505.5px;top:212.40px;font-weight:normal;font-size:6.3px;color:#484848;-webkit-text-stroke:0.05px #484848;">SET</div>
<div class="t" style="left:505.5px;top:229.90px;font-weight:normal;font-size:6.3px;color:#484848;-webkit-text-stroke:0.05px #484848;">RESET1</div>
<div class="t" style="left:829.5px;top:212.40px;font-weight:normal;font-size:6.3px;color:#484848;-webkit-text-stroke:0.05px #484848;">SET</div>
<div class="t" style="left:829.5px;top:230.00px;font-weight:normal;font-size:6.3px;color:#484848;-webkit-text-stroke:0.05px #484848;">RESET1</div>
<div class="t" style="left:462.5px;top:419.60px;font-weight:normal;font-size:6.3px;color:#484848;-webkit-text-stroke:0.05px #484848;">SET</div>
<div class="t" style="left:462.5px;top:437.20px;font-weight:normal;font-size:6.3px;color:#484848;-webkit-text-stroke:0.05px #484848;">RESET1</div>
<div class="t" style="left:592px;top:419.70px;font-weight:normal;font-size:6.3px;color:#484848;-webkit-text-stroke:0.05px #484848;">IN</div>
<div class="t" style="left:592px;top:437.40px;font-weight:normal;font-size:6.3px;color:#484848;-webkit-text-stroke:0.05px #484848;">PT</div>
<div class="t" style="right:624.5px;text-align:right;top:212.40px;font-weight:normal;font-size:6.3px;color:#484848;-webkit-text-stroke:0.05px #484848;">Q1</div>
<div class="t" style="right:300.5px;text-align:right;top:212.40px;font-weight:normal;font-size:6.3px;color:#484848;-webkit-text-stroke:0.05px #484848;">Q1</div>
<div class="t" style="right:667.5px;text-align:right;top:419.60px;font-weight:normal;font-size:6.3px;color:#484848;-webkit-text-stroke:0.05px #484848;">Q1</div>
<div class="t" style="right:538.5px;text-align:right;top:419.70px;font-weight:normal;font-size:6.3px;color:#484848;-webkit-text-stroke:0.05px #484848;">Q</div>
<div class="t" style="right:539px;text-align:right;top:437.40px;font-weight:normal;font-size:6.3px;color:#484848;-webkit-text-stroke:0.05px #484848;">ET</div>
<svg class="r" style="left:0px;top:0px;" width="1200" height="540" viewBox="0 0 1200 540"><path d="M873.5 305.5v6.5M873.5 308.7h3.2M876.7 305.5v6.5M880.8 305.5l-2.5 3.2 2.5 3.2M882.3 305.5l2.3 3.2-2.3 3.2M887 305.5v6.5M884.7 308.7h2.3" fill="none" stroke="#5a5a5a" stroke-width="1.5"/><rect x="892" y="305" width="6.5" height="8" fill="#5a5a5a"/><path d="M892 306.8h6.5M892 309h6.5M892 311.2h6.5" stroke="#fff" stroke-width="0.45"/><path d="M898.5 305.8h2M898.5 309h2.3M898.5 312.2h2" stroke="#5a5a5a" stroke-width="1.2"/><path d="M909.2 306.5l3.3-3.8 3.3 3.8M909.2 311.5l3.3 3.8 3.3-3.8" fill="none" stroke="#5a5a5a" stroke-width="1.9"/><path d="M926 305.3l-3.6 3.6 3.6 3.6M931.5 305.3l3.6 3.6-3.6 3.6" fill="none" stroke="#5a5a5a" stroke-width="1.9"/><rect x="867.5" y="320.5" width="15" height="10.8" fill="none" stroke="#6cc0c4" stroke-width="1.2"/><rect x="1017" y="184" width="3.8" height="284.5" fill="#8a8a8a"/><path d="M1016 146.5l3 -3 3 3" fill="none" stroke="#333" stroke-width="1.4"/><path d="M1016 514.5l3 3 3 -3" fill="none" stroke="#333" stroke-width="1.3"/><rect x="594" y="524.1" width="380.5" height="3.6" fill="#8a8a8a"/><path d="M226.5 522.5l-2 2.5 2 2.5" fill="none" stroke="#333" stroke-width="1.3"/><path d="M1007.5 522.5l2 2.5-2 2.5" fill="none" stroke="#333" stroke-width="1.3"/><rect x="1014" y="521" width="9.5" height="9.5" fill="#eeeeee"/><rect x="919.2" y="492" width="46.8" height="26" fill="rgba(222,226,226,0.45)"/><rect x="966" y="495.2" width="47.2" height="22.8" fill="rgba(170,214,220,0.55)"/><rect x="972.29" y="497.75" width="3.57" height="0.95" fill="#b5bcbd"/><rect x="972.29" y="498.81" width="3.57" height="1.01" fill="#b5bcbd"/><rect x="1007.66" y="497.74" width="3.58" height="0.96" fill="#b5bcbd"/><rect x="968.06" y="511.92" width="3.56" height="0.96" fill="#b5bcbd"/><rect x="968.07" y="514.09" width="4.95" height="0.99" fill="#b5bcbd"/><rect x="983.61" y="511.92" width="2.17" height="0.97" fill="#b5bcbd"/><rect x="1002.02" y="513.01" width="4.98" height="0.97" fill="#b5bcbd"/><rect x="980.78" y="497.12" width="4.98" height="2.74" fill="#b5bcbd"/><rect x="1002.02" y="497.15" width="4.97" height="2.70" fill="#b5bcbd"/><rect x="977.97" y="510.24" width="4.97" height="2.70" fill="#b5bcbd"/><rect x="986.46" y="510.24" width="4.95" height="2.70" fill="#b5bcbd"/><rect x="987.86" y="501.52" width="2.15" height="2.70" fill="#b5bcbd"/><rect x="997.74" y="500.41" width="2.16" height="2.71" fill="#b5bcbd"/><rect x="994.93" y="512.41" width="2.15" height="2.70" fill="#b5bcbd"/><path d="M971.96 497.40L971.96 511.29" stroke="#9aa3a4" stroke-width="0.5"/><path d="M971.96 511.29L977.96 511.29" stroke="#9aa3a4" stroke-width="0.5"/><path d="M980.45 499.29L980.45 502.58" stroke="#9aa3a4" stroke-width="0.5"/><path d="M980.45 502.58L987.85 502.58" stroke="#9aa3a4" stroke-width="0.5"/><path d="M985.75 498.22L1002.00 498.22" stroke="#9aa3a4" stroke-width="0.5"/><path d="M997.42 502.58L997.42 513.50" stroke="#9aa3a4" stroke-width="0.5"/><path d="M987.50 503.65L987.50 509.40" stroke="#9aa3a4" stroke-width="0.5"/><path d="M987.50 509.40L997.42 509.40" stroke="#9aa3a4" stroke-width="0.5"/><path d="M972.98 514.57L994.93 514.57" stroke="#9aa3a4" stroke-width="0.5"/><path d="M997.09 513.50L1002.00 513.50" stroke="#9aa3a4" stroke-width="0.5"/><path d="M990.01 502.58L997.74 502.58" stroke="#9aa3a4" stroke-width="0.5"/><path d="M998.5 485.5l4 4M1002.5 485.5l-4 4" stroke="#d0404a" stroke-width="1.2"/><g fill="none" stroke="#888" stroke-width="0.8"><circle cx="1007" cy="484" r="2.2"/><circle cx="1010" cy="487" r="2.2"/><circle cx="1007" cy="488" r="1.8"/></g></svg>
<div class="r" style="left:220px;top:534.5px;width:804px;height:1.7px;background:#ad58dc;"></div>
<div class="r" style="left:220px;top:536px;width:804px;height:12.5px;background:#58585a;"></div>
<div class="t" style="left:404px;width:400px;text-align:center;top:532.70px;font-weight:bold;font-size:7px;color:#f0f0f0;">FEHLERLISTE</div>
<div class="r" style="left:220px;top:548.5px;width:804px;height:18.5px;background:#f4f4f4;"></div>
<svg class="r" style="left:0px;top:0px;" width="1200" height="600" viewBox="0 0 1200 600"><path d="M991 542h6M991 539.5v5M997 539.5v5M993 542l-1.5-1.3v2.6zM995 542l1.5-1.3v2.6z" stroke="#ddd" stroke-width="0.8" fill="#ddd"/><path d="M1003 545l4.5-4.5M1004 540.5h3.5v3.5" fill="none" stroke="#ddd" stroke-width="0.9"/><path d="M1014.5 539.5l5 5M1019.5 539.5l-5 5" stroke="#ddd" stroke-width="0.9"/><path d="M909.5 554.5h7l-2.5 3v3.5h-2v-3.5z" fill="#333"/><rect x="922.7" y="551.7" width="91" height="13.6" fill="#fff" stroke="#dfe3e3" stroke-width="0.8"/><path d="M1001.5 555.0h7l-2.5 3v3.5h-2v-3.5z" fill="#555"/><circle cx="1002.5" cy="559.5" r="2" fill="none" stroke="#1a9aa0" stroke-width="1.2"/><path d="M1003.9 560.9l1.6 1.6" stroke="#1a9aa0" stroke-width="1.3"/><path d="M1019 562.5l1 .8 1-.8" stroke="#bbb" stroke-width="0.6" fill="none"/></svg>
<div class="t" style="left:929.5px;top:548.80px;font-weight:normal;font-size:7px;color:#a0a0a0;-webkit-text-stroke:0.12px #a0a0a0;">Suche</div>
<div class="r" style="left:220px;top:567px;width:804px;height:121px;background:#ffffff;"></div>
<div class="r" style="left:220px;top:583.8px;width:802px;height:1.4px;background:#a0a0a0;"></div>
<div class="r" style="left:239.7px;top:568px;width:0.8px;height:16px;background:#c4c4c4;"></div>
<div class="r" style="left:264.5px;top:568px;width:0.8px;height:16px;background:#c4c4c4;"></div>
<div class="r" style="left:327.5px;top:568px;width:0.8px;height:16px;background:#c4c4c4;"></div>
<div class="r" style="left:641.6px;top:568px;width:0.8px;height:16px;background:#c4c4c4;"></div>
<div class="t" style="left:271.7px;top:568.30px;font-weight:normal;font-size:7px;color:#333;-webkit-text-stroke:0.12px #333;">Code</div>
<div class="t" style="left:334.5px;top:568.30px;font-weight:normal;font-size:7px;color:#333;-webkit-text-stroke:0.12px #333;">Beschreibung</div>
<div class="r" style="left:220px;top:688px;width:804px;height:1.5px;background:#4a4a4a;"></div>
<div class="r" style="left:220px;top:689.5px;width:804px;height:22.5px;background:#ebecec;"></div>
<div class="r" style="left:222px;top:691px;width:18.8px;height:18px;background:#7cc4c8;"></div>
<svg class="r" style="left:0px;top:0px;" width="1200" height="752" viewBox="0 0 1200 752"><path d="M225.5 573.5h7l-2.5 3v3h-2v-3z" fill="#d8d8d8"/><circle cx="232" cy="578.5" r="2.2" fill="none" stroke="#d8d8d8" stroke-width="0.9"/><rect x="225" y="696.0" width="12" height="9" fill="#e8e8e8" stroke="#555" stroke-width="0.9"/><rect x="227" y="698.2" width="8" height="5" fill="#b8b8b8"/><rect x="250" y="695.5" width="12" height="10" fill="#fff" stroke="#666" stroke-width="0.9"/><path d="M250 696.8h12" stroke="#666" stroke-width="1.2"/><circle cx="256" cy="701.3" r="2.6" fill="none" stroke="#555" stroke-width="0.9"/><path d="M258 703.3l2.5 2.5" stroke="#555" stroke-width="1.1"/><rect x="272.5" y="695.5" width="12" height="10" fill="#fff" stroke="#666" stroke-width="0.9"/><path d="M272.5 696.8h12" stroke="#666" stroke-width="1.2"/><circle cx="275.5" cy="701.5" r="1.2" fill="#555"/><circle cx="281.5" cy="699.5" r="1.2" fill="#555"/><circle cx="281.5" cy="703.5" r="1.2" fill="#555"/><path d="M275.5 701.5L281.5 699.5M275.5 701.5L281.5 703.5" stroke="#555" stroke-width="0.6"/><rect x="295.3" y="695.5" width="12" height="10" fill="#fff" stroke="#666" stroke-width="0.9"/><path d="M295.3 696.8h12" stroke="#666" stroke-width="1.2"/><rect x="297.3" y="698.5" width="4" height="3" fill="none" stroke="#555" stroke-width="0.6"/><rect x="301.3" y="701.0" width="4.5" height="3.5" fill="#1a9aa0"/><rect x="318.5" y="695.5" width="12" height="10" fill="#fff" stroke="#666" stroke-width="0.9"/><path d="M318.5 696.8h12" stroke="#666" stroke-width="1.2"/><path d="M320.5 700.5h3v2h-3zM325.5 700.5h3v2h-3z" fill="none" stroke="#555" stroke-width="0.8"/><rect x="342" y="695.5" width="12" height="10" fill="#fff" stroke="#666" stroke-width="0.9"/><path d="M342 696.8h12" stroke="#666" stroke-width="1.2"/><path d="M344 703.5l2.5-3 2 2 3.5-4" fill="none" stroke="#555" stroke-width="0.9"/><rect x="365.2" y="695.5" width="12" height="10" fill="#fff" stroke="#666" stroke-width="0.9"/><path d="M365.2 696.8h12" stroke="#666" stroke-width="1.2"/><rect x="368.7" y="699.5" width="5" height="4.5" fill="#555"/><rect x="370.2" y="697.5" width="2" height="2" fill="#555"/><rect x="388.5" y="695.5" width="12" height="10" fill="#fff" stroke="#666" stroke-width="0.9"/><path d="M388.5 696.8h12" stroke="#666" stroke-width="1.2"/><circle cx="390.5" cy="704.0" r="3" fill="#555"/><rect x="411.8" y="695.5" width="12" height="10" fill="#fff" stroke="#666" stroke-width="0.9"/><path d="M411.8 696.8h12" stroke="#666" stroke-width="1.2"/><path d="M414.8 699.5h5M414.8 701.5h3" stroke="#666" stroke-width="0.8"/><path d="M418.8 704.5q3 0 4-4" fill="none" stroke="#1a9aa0" stroke-width="1.4"/><rect x="435" y="695.5" width="12" height="10" fill="#fff" stroke="#666" stroke-width="0.9"/><path d="M435 696.8h12" stroke="#666" stroke-width="1.2"/><rect x="437.5" y="700.0" width="7" height="3" rx="1.5" fill="#555"/><rect x="458.5" y="695.5" width="12" height="10" fill="#fff" stroke="#666" stroke-width="0.9"/><path d="M458.5 696.8h12" stroke="#666" stroke-width="1.2"/><text x="460.2" y="703.1" font-family="Liberation Sans" font-weight="bold" font-size="4.6" fill="#555">LOG</text><rect x="481.5" y="695.5" width="12" height="10" fill="#fff" stroke="#666" stroke-width="0.9"/><path d="M481.5 696.8h12" stroke="#666" stroke-width="1.2"/><rect x="481.5" y="701.0" width="5" height="5" fill="#555"/><rect x="488.5" y="691.5" width="6" height="4.5" fill="#8a3fb5"/><circle cx="494.0" cy="697.0" r="1.6" fill="#fff" stroke="#8a3fb5" stroke-width="0.8"/></svg>
<div class="r" style="left:1028px;top:67px;width:168px;height:2px;background:#4fa3d9;"></div>
<div class="r" style="left:1028px;top:69px;width:168px;height:13px;background:#58585a;"></div>
<div class="t" style="left:912px;width:400px;text-align:center;top:65.80px;font-weight:bold;font-size:7px;color:#f0f0f0;">KOMPONENTEN</div>
<div class="r" style="left:1028px;top:82px;width:168px;height:18px;background:#f4f4f4;"></div>
<svg class="r" style="left:0px;top:0px;" width="1200" height="110" viewBox="0 0 1200 110"><path d="M1035.0 86.5h3l-3 3z" fill="#4a4a4a"/><path d="M1036.0 87.5L1038.7 90.2" stroke="#4a4a4a" stroke-width="0.8"/><path d="M1035.0 95.5h3l-3 -3z" fill="#4a4a4a"/><path d="M1036.0 94.5L1038.7 91.8" stroke="#4a4a4a" stroke-width="0.8"/><path d="M1044.0 86.5h-3l3 3z" fill="#4a4a4a"/><path d="M1043.0 87.5L1040.3 90.2" stroke="#4a4a4a" stroke-width="0.8"/><path d="M1044.0 95.5h-3l3 -3z" fill="#4a4a4a"/><path d="M1043.0 94.5L1040.3 91.8" stroke="#4a4a4a" stroke-width="0.8"/><path d="M1053.3 89.8h-3l3 -3z" fill="#4a4a4a"/><path d="M1052.3 88.8L1049.5 86" stroke="#4a4a4a" stroke-width="0.8"/><path d="M1053.3 92.2h-3l3 3z" fill="#4a4a4a"/><path d="M1052.3 93.2L1049.5 96" stroke="#4a4a4a" stroke-width="0.8"/><path d="M1055.7 89.8h3l-3 -3z" fill="#4a4a4a"/><path d="M1056.7 88.8L1059.5 86" stroke="#4a4a4a" stroke-width="0.8"/><path d="M1055.7 92.2h3l-3 3z" fill="#4a4a4a"/><path d="M1056.7 93.2L1059.5 96" stroke="#4a4a4a" stroke-width="0.8"/><path d="M1065.0 89l2.6-2v4z" fill="#4a4a4a"/><path d="M1067.0 89h6.5" stroke="#4a4a4a" stroke-width="1.1"/><path d="M1074.0 93l-2.6-2v4z" fill="#4a4a4a"/><path d="M1072.0 93h-6.5" stroke="#4a4a4a" stroke-width="1.1"/><rect x="1104.3" y="83.5" width="81" height="15" fill="#fff" stroke="#3fb1b6" stroke-width="1"/><path d="M1173.5 87.5h7l-2.5 3v3.5h-2v-3.5z" fill="#555"/><circle cx="1174.5" cy="92" r="2" fill="none" stroke="#1a9aa0" stroke-width="1.2"/><path d="M1175.9 93.4l1.6 1.6" stroke="#1a9aa0" stroke-width="1.3"/><path d="M1083.5 96.5l1 .8 1-.8M1192 96.5l1 .8 1-.8" stroke="#bbb" stroke-width="0.6" fill="none"/></svg>
<div class="t" style="left:1111px;top:81.10px;font-weight:normal;font-size:7px;color:#a0a0a0;-webkit-text-stroke:0.12px #a0a0a0;">Suche</div>
<div class="r" style="left:1028px;top:99.8px;width:168px;height:0.8px;background:#c8c8c8;"></div>
<div class="r" style="left:1028px;top:100.6px;width:168px;height:611.4px;background:#ffffff;"></div>
<div class="t" style="left:1052.7px;top:100.00px;font-weight:bold;font-size:7px;color:#333;">Programmierung (370)</div>
<div class="r" style="left:1031px;top:123.3px;width:162px;height:0.8px;background:#f0f0f0;"></div>
<div class="r" style="left:1029px;top:160.5px;width:156px;height:10.8px;background:#e9eaea;"></div>
<div class="r" style="left:1028px;top:125px;width:158px;height:244.5px;overflow:hidden;">
<div class="t" style="left:27.5px;top:-2.50px;font-weight:normal;font-size:7px;color:#333;-webkit-text-stroke:0.12px #333;">Lokal (4)</div>
<div class="t" style="left:39.5px;top:8.80px;font-weight:normal;font-size:7px;color:#333;-webkit-text-stroke:0.12px #333;">Datentypen (0)</div>
<div class="t" style="left:39.5px;top:20.10px;font-weight:normal;font-size:7px;color:#333;-webkit-text-stroke:0.12px #333;">Funktionen &amp; Funktionsbausteine (3)</div>
<div class="t" style="left:51.5px;top:31.40px;font-weight:normal;font-size:7px;color:#333;-webkit-text-stroke:0.12px #333;">Sicherheitsblock</div>
<div class="t" style="left:51.5px;top:42.70px;font-weight:normal;font-size:7px;color:#333;-webkit-text-stroke:0.12px #333;">TempMessung_Heizstab</div>
<div class="t" style="left:51.5px;top:54.00px;font-weight:normal;font-size:7px;color:#333;-webkit-text-stroke:0.12px #333;">TempMessung_Platine</div>
<div class="t" style="left:39.5px;top:65.30px;font-weight:normal;font-size:7px;color:#333;-webkit-text-stroke:0.12px #333;">Programme (1)</div>
<div class="t" style="left:51.5px;top:76.60px;font-weight:normal;font-size:7px;color:#333;-webkit-text-stroke:0.12px #333;">Main</div>
<div class="t" style="left:27.5px;top:87.90px;font-weight:normal;font-size:7px;color:#333;-webkit-text-stroke:0.12px #333;">Extended (75)</div>
<div class="t" style="left:27.5px;top:99.20px;font-weight:normal;font-size:7px;color:#333;-webkit-text-stroke:0.12px #333;">IEC 61131-3 (134)</div>
<div class="t" style="left:39.5px;top:110.50px;font-weight:normal;font-size:7px;color:#333;-webkit-text-stroke:0.12px #333;">Funktionen &amp; Funktionsbausteine (134)</div>
<div class="t" style="left:51.5px;top:121.80px;font-weight:normal;font-size:7px;color:#333;-webkit-text-stroke:0.12px #333;">Arithmetische Funktionen (22)</div>
<div class="t" style="left:63.5px;top:133.10px;font-weight:normal;font-size:7px;color:#333;-webkit-text-stroke:0.12px #333;">ADD</div>
<div class="t" style="left:63.5px;top:144.40px;font-weight:normal;font-size:7px;color:#333;-webkit-text-stroke:0.12px #333;">ADD_LDT_LTIME</div>
<div class="t" style="left:63.5px;top:155.70px;font-weight:normal;font-size:7px;color:#333;-webkit-text-stroke:0.12px #333;">ADD_LTIME</div>
<div class="t" style="left:63.5px;top:167.00px;font-weight:normal;font-size:7px;color:#333;-webkit-text-stroke:0.12px #333;">ADD_LTOD_LTIME</div>
<div class="t" style="left:63.5px;top:178.30px;font-weight:normal;font-size:7px;color:#333;-webkit-text-stroke:0.12px #333;">ADD_TIME</div>
<div class="t" style="left:63.5px;top:189.60px;font-weight:normal;font-size:7px;color:#333;-webkit-text-stroke:0.12px #333;">DIV</div>
<div class="t" style="left:63.5px;top:200.90px;font-weight:normal;font-size:7px;color:#333;-webkit-text-stroke:0.12px #333;">DIV_LTIME</div>
<div class="t" style="left:63.5px;top:212.20px;font-weight:normal;font-size:7px;color:#333;-webkit-text-stroke:0.12px #333;">DIV_TIME</div>
<div class="t" style="left:63.5px;top:223.50px;font-weight:normal;font-size:7px;color:#333;-webkit-text-stroke:0.12px #333;">EXPT</div>
<div class="t" style="left:63.5px;top:234.80px;font-weight:normal;font-size:7px;color:#333;-webkit-text-stroke:0.12px #333;">MOD</div>
<svg class="r" style="left:0px;top:0px;" width="158" height="245" viewBox="0 0 158 245"><path d="M8.6 5.8l2.4 2.4l2.4 -2.4" fill="none" stroke="#444" stroke-width="1.1"/><path d="M17.0 3.0h3.5l1 1.2h4.5v7.3h-9z" fill="#3d95c9"/><rect x="18.5" y="5.7" width="6" height="3" fill="#fff"/><path d="M19.5 7.2h4" stroke="#3d95c9" stroke-width="0.8"/><path d="M29.0 14.300000000000011h3.5l1 1.2h4.5v7.3h-9z" fill="#7dbde3"/><path d="M29.0 16.50000000000001h9v5.3h-9z" fill="#4a9fd0"/><path d="M29.0 18.30000000000001h9M29.0 20.100000000000012h9" stroke="#7dbde3" stroke-width="0.4"/><path d="M20.6 28.399999999999995l2.4 2.4l2.4 -2.4" fill="none" stroke="#444" stroke-width="1.1"/><path d="M29.0 25.599999999999994h3.5l1 1.2h4.5v7.3h-9z" fill="#7dbde3"/><path d="M29.0 27.799999999999994h9v5.3h-9z" fill="#4a9fd0"/><path d="M29.0 29.599999999999994h9M29.0 31.399999999999995h9" stroke="#7dbde3" stroke-width="0.4"/><rect x="41.5" y="37.900000000000006" width="8" height="6.5" rx="0.8" fill="none" stroke="#3d95c9" stroke-width="1"/><path d="M41.5 39.400000000000006h8" stroke="#3d95c9" stroke-width="1"/><path d="M40.5 41.900000000000006h1.5M49.0 41.900000000000006h1.5" stroke="#3d95c9" stroke-width="1"/><rect x="41.5" y="49.19999999999999" width="8" height="6.5" rx="0.8" fill="none" stroke="#3d95c9" stroke-width="1"/><path d="M41.5 50.69999999999999h8" stroke="#3d95c9" stroke-width="1"/><path d="M40.5 53.19999999999999h1.5M49.0 53.19999999999999h1.5" stroke="#3d95c9" stroke-width="1"/><rect x="41.5" y="60.5" width="8" height="6.5" rx="0.8" fill="none" stroke="#3d95c9" stroke-width="1"/><path d="M41.5 62.0h8" stroke="#3d95c9" stroke-width="1"/><path d="M40.5 64.5h1.5M49.0 64.5h1.5" stroke="#3d95c9" stroke-width="1"/><path d="M20.6 73.60000000000001l2.4 2.4l2.4 -2.4" fill="none" stroke="#444" stroke-width="1.1"/><path d="M29.0 70.80000000000001h3.5l1 1.2h4.5v7.3h-9z" fill="#7dbde3"/><path d="M29.0 73.00000000000001h9v5.3h-9z" fill="#4a9fd0"/><path d="M29.0 74.80000000000001h9M29.0 76.60000000000001h9" stroke="#7dbde3" stroke-width="0.4"/><rect x="41.5" y="81.90000000000002" width="8.4" height="8.4" fill="#e4f0f7" stroke="#8fc0de" stroke-width="1"/><rect x="43.5" y="84.10000000000002" width="4" height="4.2" fill="none" stroke="#6aaad3" stroke-width="0.9"/><path d="M9.8 95.0l2.4 2.4l-2.4 2.4" fill="none" stroke="#444" stroke-width="1.1"/><rect x="18.0" y="92.9" width="7" height="9" fill="#3d95c9"/><path d="M19.5 99.9h5" stroke="#fff" stroke-width="0.8"/><path d="M8.6 107.49999999999999l2.4 2.4l2.4 -2.4" fill="none" stroke="#444" stroke-width="1.1"/><rect x="18.0" y="104.19999999999999" width="7" height="9" fill="#3d95c9"/><path d="M19.5 111.19999999999999h5" stroke="#fff" stroke-width="0.8"/><path d="M20.6 118.8l2.4 2.4l2.4 -2.4" fill="none" stroke="#444" stroke-width="1.1"/><path d="M29.0 116.0h3.5l1 1.2h4.5v7.3h-9z" fill="#7dbde3"/><path d="M29.0 118.2h9v5.3h-9z" fill="#4a9fd0"/><path d="M29.0 120.0h9M29.0 121.8h9" stroke="#7dbde3" stroke-width="0.4"/><path d="M32.6 130.10000000000002l2.4 2.4l2.4 -2.4" fill="none" stroke="#444" stroke-width="1.1"/><path d="M41.0 127.30000000000001h3.5l1 1.2h4.5v7.3h-9z" fill="#7dbde3"/><path d="M41.0 129.5h9v5.3h-9z" fill="#4a9fd0"/><path d="M41.0 131.3h9M41.0 133.10000000000002h9" stroke="#7dbde3" stroke-width="0.4"/><rect x="54.0" y="139.60000000000002" width="7.5" height="6" rx="1" fill="#3d95c9"/><path d="M52.5 141.10000000000002h1.5M52.5 144.10000000000002h1.5M61.5 142.60000000000002h1.2" stroke="#3d95c9" stroke-width="0.9"/><rect x="54.0" y="150.89999999999998" width="7.5" height="6" rx="1" fill="#3d95c9"/><path d="M52.5 152.39999999999998h1.5M52.5 155.39999999999998h1.5M61.5 153.89999999999998h1.2" stroke="#3d95c9" stroke-width="0.9"/><rect x="54.0" y="162.20000000000005" width="7.5" height="6" rx="1" fill="#3d95c9"/><path d="M52.5 163.70000000000005h1.5M52.5 166.70000000000005h1.5M61.5 165.20000000000005h1.2" stroke="#3d95c9" stroke-width="0.9"/><rect x="54.0" y="173.5" width="7.5" height="6" rx="1" fill="#3d95c9"/><path d="M52.5 175.0h1.5M52.5 178.0h1.5M61.5 176.5h1.2" stroke="#3d95c9" stroke-width="0.9"/><rect x="54.0" y="184.8" width="7.5" height="6" rx="1" fill="#3d95c9"/><path d="M52.5 186.3h1.5M52.5 189.3h1.5M61.5 187.8h1.2" stroke="#3d95c9" stroke-width="0.9"/><rect x="54.0" y="196.10000000000002" width="7.5" height="6" rx="1" fill="#3d95c9"/><path d="M52.5 197.60000000000002h1.5M52.5 200.60000000000002h1.5M61.5 199.10000000000002h1.2" stroke="#3d95c9" stroke-width="0.9"/><rect x="54.0" y="207.39999999999998" width="7.5" height="6" rx="1" fill="#3d95c9"/><path d="M52.5 208.89999999999998h1.5M52.5 211.89999999999998h1.5M61.5 210.39999999999998h1.2" stroke="#3d95c9" stroke-width="0.9"/><rect x="54.0" y="218.70000000000005" width="7.5" height="6" rx="1" fill="#3d95c9"/><path d="M52.5 220.20000000000005h1.5M52.5 223.20000000000005h1.5M61.5 221.70000000000005h1.2" stroke="#3d95c9" stroke-width="0.9"/><rect x="54.0" y="230.0" width="7.5" height="6" rx="1" fill="#3d95c9"/><path d="M52.5 231.5h1.5M52.5 234.5h1.5M61.5 233.0h1.2" stroke="#3d95c9" stroke-width="0.9"/><rect x="54.0" y="241.3" width="7.5" height="6" rx="1" fill="#3d95c9"/><path d="M52.5 242.8h1.5M52.5 245.8h1.5M61.5 244.3h1.2" stroke="#3d95c9" stroke-width="0.9"/></svg>
</div>
<div class="r" style="left:1186px;top:371px;width:7px;height:8px;background:#eeeeee;"></div>
<div class="r" style="left:1028px;top:379.8px;width:168px;height:1.5px;background:#a5a5a5;"></div>
<div class="r" style="left:1028px;top:381px;width:168px;height:17px;background:#ebecec;"></div>
<div class="t" style="left:1052.7px;top:379.70px;font-weight:bold;font-size:7px;color:#333;">PLCnext Komponenten &amp; Programme (2)</div>
<div class="r" style="left:1028px;top:398px;width:168px;height:1.5px;background:#a5a5a5;"></div>
<div class="r" style="left:1028px;top:399.2px;width:168px;height:15.300000000000011px;background:#ebecec;"></div>
<div class="t" style="left:1052.7px;top:397.05px;font-weight:bold;font-size:7px;color:#333;">Netzwerk (505)</div>
<div class="r" style="left:1028px;top:414.5px;width:168px;height:1.5px;background:#a5a5a5;"></div>
<div class="t" style="left:1052.7px;top:414.10px;font-weight:bold;font-size:7px;color:#333;">HMI (34)</div>
<div class="r" style="left:1031px;top:437.5px;width:162px;height:0.8px;background:#f0f0f0;"></div>
<div class="r" style="left:1028px;top:439px;width:158px;height:254px;overflow:hidden;">
<div class="t" style="left:27.5px;top:-2.60px;font-weight:normal;font-size:7px;color:#333;-webkit-text-stroke:0.12px #333;">Objekte (13)</div>
<div class="t" style="left:39.5px;top:8.71px;font-weight:normal;font-size:7px;color:#333;-webkit-text-stroke:0.12px #333;">Checkbox</div>
<div class="t" style="left:39.5px;top:20.02px;font-weight:normal;font-size:7px;color:#333;-webkit-text-stroke:0.12px #333;">Diagramm</div>
<div class="t" style="left:39.5px;top:31.33px;font-weight:normal;font-size:7px;color:#333;-webkit-text-stroke:0.12px #333;">Ellipse</div>
<div class="t" style="left:39.5px;top:42.64px;font-weight:normal;font-size:7px;color:#333;-webkit-text-stroke:0.12px #333;">Lineare Messskala</div>
<div class="t" style="left:39.5px;top:53.95px;font-weight:normal;font-size:7px;color:#333;-webkit-text-stroke:0.12px #333;">Linie</div>
<div class="t" style="left:39.5px;top:65.26px;font-weight:normal;font-size:7px;color:#333;-webkit-text-stroke:0.12px #333;">Polykurve</div>
<div class="t" style="left:39.5px;top:76.57px;font-weight:normal;font-size:7px;color:#333;-webkit-text-stroke:0.12px #333;">Polylinie</div>
<div class="t" style="left:39.5px;top:87.88px;font-weight:normal;font-size:7px;color:#333;-webkit-text-stroke:0.12px #333;">Radiale Messskala</div>
<div class="t" style="left:39.5px;top:99.19px;font-weight:normal;font-size:7px;color:#333;-webkit-text-stroke:0.12px #333;">Rechteck</div>
<div class="t" style="left:39.5px;top:110.50px;font-weight:normal;font-size:7px;color:#333;-webkit-text-stroke:0.12px #333;">Schaltfläche</div>
<div class="t" style="left:39.5px;top:121.81px;font-weight:normal;font-size:7px;color:#333;-webkit-text-stroke:0.12px #333;">Symbolliste</div>
<div class="t" style="left:39.5px;top:133.12px;font-weight:normal;font-size:7px;color:#333;-webkit-text-stroke:0.12px #333;">Text</div>
<div class="t" style="left:39.5px;top:144.43px;font-weight:normal;font-size:7px;color:#333;-webkit-text-stroke:0.12px #333;">Texteingabe</div>
<div class="t" style="left:27.5px;top:155.74px;font-weight:normal;font-size:7px;color:#333;-webkit-text-stroke:0.12px #333;">Lokal (0)</div>
<div class="t" style="left:27.5px;top:167.05px;font-weight:normal;font-size:7px;color:#333;-webkit-text-stroke:0.12px #333;">Default (21)</div>
<div class="t" style="left:39.5px;top:178.36px;font-weight:normal;font-size:7px;color:#333;-webkit-text-stroke:0.12px #333;">Bilder (5)</div>
<div class="t" style="left:39.5px;top:189.67px;font-weight:normal;font-size:7px;color:#333;-webkit-text-stroke:0.12px #333;">Seitenvorlagen (2)</div>
<div class="t" style="left:39.5px;top:200.98px;font-weight:normal;font-size:7px;color:#333;-webkit-text-stroke:0.12px #333;">Symbole (14)</div>
<div class="t" style="left:51.5px;top:212.29px;font-weight:normal;font-size:7px;color:#333;-webkit-text-stroke:0.12px #333;">Bar Graph</div>
<div class="t" style="left:51.5px;top:223.60px;font-weight:normal;font-size:7px;color:#333;-webkit-text-stroke:0.12px #333;">Bar Graph Horizontal</div>
<div class="t" style="left:51.5px;top:234.91px;font-weight:normal;font-size:7px;color:#333;-webkit-text-stroke:0.12px #333;">Horizontal Gauge</div>
<div class="t" style="left:51.5px;top:246.22px;font-weight:normal;font-size:7px;color:#333;-webkit-text-stroke:0.12px #333;">Horizontal Bar</div>
<svg class="r" style="left:0px;top:0px;" width="158" height="254" viewBox="0 0 158 254"><path d="M8.6 5.699999999999977l2.4 2.4l2.4 -2.4" fill="none" stroke="#444" stroke-width="1.1"/><path d="M17.0 2.8999999999999773h3.5l1 1.2h4.5v7.3h-9z" fill="#7dbde3"/><path d="M17.0 5.099999999999977h9v5.3h-9z" fill="#4a9fd0"/><path d="M17.0 6.899999999999977h9M17.0 8.699999999999978h9" stroke="#7dbde3" stroke-width="0.4"/><rect x="29.5" y="14.20999999999998" width="8" height="8" fill="#3d95c9"/><path d="M31.0 18.20999999999998l1.8 2 3-3.5" fill="none" stroke="#fff" stroke-width="1.1"/><rect x="29.0" y="25.519999999999982" width="9" height="8" fill="none" stroke="#3d95c9" stroke-width="0.9"/><path d="M30.0 32.01999999999998l2.5-3 2 1.5 3-3" fill="none" stroke="#3d95c9" stroke-width="0.9"/><ellipse cx="33.5" cy="40.829999999999984" rx="4.5" ry="2.8" fill="#3d95c9"/><rect x="32.0" y="47.139999999999986" width="3" height="10" fill="#fff" stroke="#3d95c9" stroke-width="0.9"/><path d="M32.0 50.139999999999986h2M32.0 52.139999999999986h2M32.0 54.139999999999986h2" stroke="#3d95c9" stroke-width="0.6"/><path d="M29.0 63.44999999999999h9" stroke="#3d95c9" stroke-width="1.1"/><path d="M29.0 71.25999999999999l2 7 2.5-7 2 7 2.5-7" fill="none" stroke="#3d95c9" stroke-width="1.2"/><path d="M29.0 84.06999999999994h3v4h6" fill="none" stroke="#3d95c9" stroke-width="1.2"/><circle cx="33.5" cy="97.38" r="4.2" fill="none" stroke="#3d95c9" stroke-width="0.9"/><path d="M33.5 97.38l2 -2.5" stroke="#3d95c9" stroke-width="0.9"/><rect x="29.0" y="105.48999999999994" width="9" height="6.5" fill="none" stroke="#3d95c9" stroke-width="0.9"/><rect x="29.0" y="116.5" width="9" height="7" rx="1" fill="#3d95c9"/><path d="M33.5 118.0l2.5 2-2.5 2z" fill="#fff"/><rect x="29.5" y="126.80999999999995" width="8" height="9" fill="none" stroke="#3d95c9" stroke-width="0.9"/><rect x="29.5" y="133.30999999999995" width="8" height="2.5" fill="#3d95c9"/><path d="M31.0 128.80999999999995h5M31.0 130.80999999999995h5" stroke="#3d95c9" stroke-width="0.6"/><path d="M30.0 146.62l3.5-8.5 3.5 8.5M31.5 143.62h4" fill="none" stroke="#3d95c9" stroke-width="1"/><rect x="29.0" y="149.92999999999995" width="9" height="8" fill="none" stroke="#3d95c9" stroke-width="0.9"/><path d="M32.5 151.92999999999995v4M31.5 151.92999999999995h2M31.5 155.92999999999995h2" stroke="#3d95c9" stroke-width="0.8"/><path d="M17.0 161.24h3.5l1 1.2h4.5v7.3h-9z" fill="#3d95c9"/><rect x="18.5" y="163.94" width="6" height="3" fill="#fff"/><path d="M19.5 165.44h4" stroke="#3d95c9" stroke-width="0.8"/><path d="M8.6 175.34999999999997l2.4 2.4l2.4 -2.4" fill="none" stroke="#444" stroke-width="1.1"/><rect x="18.0" y="172.04999999999995" width="7" height="9" fill="#3d95c9"/><path d="M19.5 179.04999999999995h5" stroke="#fff" stroke-width="0.8"/><path d="M21.8 185.46l2.4 2.4l-2.4 2.4" fill="none" stroke="#444" stroke-width="1.1"/><path d="M29.0 183.86h3.5l1 1.2h4.5v7.3h-9z" fill="#7dbde3"/><path d="M29.0 186.06h9v5.3h-9z" fill="#4a9fd0"/><path d="M29.0 187.86h9M29.0 189.66000000000003h9" stroke="#7dbde3" stroke-width="0.4"/><path d="M21.8 196.76999999999995l2.4 2.4l-2.4 2.4" fill="none" stroke="#444" stroke-width="1.1"/><path d="M29.0 195.16999999999996h3.5l1 1.2h4.5v7.3h-9z" fill="#7dbde3"/><path d="M29.0 197.36999999999995h9v5.3h-9z" fill="#4a9fd0"/><path d="M29.0 199.16999999999996h9M29.0 200.96999999999997h9" stroke="#7dbde3" stroke-width="0.4"/><path d="M20.6 209.28000000000003l2.4 2.4l2.4 -2.4" fill="none" stroke="#444" stroke-width="1.1"/><path d="M29.0 206.48000000000002h3.5l1 1.2h4.5v7.3h-9z" fill="#7dbde3"/><path d="M29.0 208.68h9v5.3h-9z" fill="#4a9fd0"/><path d="M29.0 210.48000000000002h9M29.0 212.28000000000003h9" stroke="#7dbde3" stroke-width="0.4"/><rect x="40.5" y="218.98999999999995" width="10" height="5.6" rx="2.8" fill="#3d95c9"/><circle cx="47.7" cy="221.78999999999996" r="1.8" fill="#fff"/><rect x="40.5" y="230.3" width="10" height="5.6" rx="2.8" fill="#3d95c9"/><circle cx="47.7" cy="233.10000000000002" r="1.8" fill="#fff"/><rect x="40.5" y="241.60999999999996" width="10" height="5.6" rx="2.8" fill="#3d95c9"/><circle cx="47.7" cy="244.40999999999997" r="1.8" fill="#fff"/><rect x="40.5" y="252.92000000000002" width="10" height="5.6" rx="2.8" fill="#3d95c9"/><circle cx="47.7" cy="255.72000000000003" r="1.8" fill="#fff"/></svg>
</div>
<div class="r" style="left:1028px;top:694.6px;width:168px;height:1.5px;background:#a5a5a5;"></div>
<div class="r" style="left:1028px;top:695.8px;width:168px;height:16.200000000000045px;background:#ebecec;"></div>
<div class="t" style="left:1052.7px;top:694.10px;font-weight:bold;font-size:7px;color:#333;">Bibliotheken (2)</div>
<svg class="r" style="left:0px;top:0px;" width="1200" height="752" viewBox="0 0 1200 752"><path d="M1031.3 108.4l2.2 2.2l2.2 -2.2" fill="none" stroke="#333" stroke-width="1.3"/><path d="M1041.0 105.5h3.5l1 1.2h4.5v7.3h-9z" fill="#7dbde3"/><path d="M1041.0 107.7h9v5.3h-9z" fill="#4a9fd0"/><path d="M1041.0 109.5h9M1041.0 111.3h9" stroke="#7dbde3" stroke-width="0.4"/><path d="M1188.5 131l2.5-2.5 2.5 2.5" fill="none" stroke="#333" stroke-width="1.2"/><rect x="1189.8" y="135" width="3.2" height="45" fill="#8a8a8a"/><path d="M1188.5 363.5l2.5 2.5 2.5-2.5" fill="none" stroke="#333" stroke-width="1.2"/><rect x="1038" y="374.2" width="135" height="2.8" fill="#8a8a8a"/><path d="M1033.1 373.40000000000003l-2.2 2.2l2.2 2.2" fill="none" stroke="#333" stroke-width="1.2"/><path d="M1179.9 373.40000000000003l2.2 2.2l-2.2 2.2" fill="none" stroke="#333" stroke-width="1.2"/><path d="M1032.4 387.0l2.2 2.2l-2.2 2.2" fill="none" stroke="#333" stroke-width="1.3"/><path d="M1041.0 385.2h3.5l1 1.2h4.5v7.3h-9z" fill="#7dbde3"/><path d="M1041.0 387.4h9v5.3h-9z" fill="#4a9fd0"/><path d="M1041.0 389.2h9M1041.0 391.0h9" stroke="#7dbde3" stroke-width="0.4"/><path d="M1032.4 404.35l2.2 2.2l-2.2 2.2" fill="none" stroke="#333" stroke-width="1.3"/><path d="M1042.5 403.55l4-2h3v7l-4 2h-3z" fill="#3d95c9"/><rect x="1042.0" y="404.55" width="5" height="7.5" fill="#59a8d6"/><path d="M1043.0 407.55h3" stroke="#fff" stroke-width="0.8"/><path d="M1031.3 422.5l2.2 2.2l2.2 -2.2" fill="none" stroke="#333" stroke-width="1.3"/><path d="M1041.5 426.6l3-7h4l2 4-2 3z" fill="#3d95c9"/><path d="M1040.5 427.6h10" stroke="#3d95c9" stroke-width="0.8"/><circle cx="1047.5" cy="422.6" r="1.5" fill="#fff"/><path d="M1188.5 445l2.5-2.5 2.5 2.5" fill="none" stroke="#333" stroke-width="1.2"/><rect x="1189.8" y="449" width="3.2" height="167" fill="#8a8a8a"/><path d="M1188.5 688.5l2.5 2.5 2.5-2.5" fill="none" stroke="#333" stroke-width="1.2"/><path d="M1032.4 701.4l2.2 2.2l-2.2 2.2" fill="none" stroke="#333" stroke-width="1.3"/><path d="M1041.5 698.6h5l2 2v4h-7z" fill="#3d95c9"/><rect x="1041.5" y="703.6" width="3" height="4.5" fill="#3d95c9"/><circle cx="1048.0" cy="706.1" r="2.3" fill="#fff" stroke="#3d95c9" stroke-width="1"/></svg>
<div class="r" style="left:0px;top:712px;width:1200px;height:15px;background:#3d3d3f;"></div>
<div class="t" style="left:919px;top:709.20px;font-weight:bold;font-size:7px;color:#f0f0f0;letter-spacing:-0.17px;">0 Fehler, 0 Warnungen</div>
<div class="r" style="left:1003px;top:713.8px;width:18.5px;height:10.5px;background:#f6f6f6;"></div>
<div class="r" style="left:1024.5px;top:713.8px;width:18.5px;height:10.5px;background:#f6f6f6;"></div>
<div class="t" style="left:1045.2px;top:709.20px;font-weight:bold;font-size:7px;color:#f0f0f0;letter-spacing:-0.2px;">100%</div>
<svg class="r" style="left:0px;top:0px;" width="1200" height="752" viewBox="0 0 1200 752"><circle cx="1011.3" cy="718" r="2.6" fill="#7fd3d8" stroke="#555" stroke-width="0.8"/><path d="M1013 720l2.3 2.5" stroke="#555" stroke-width="1.1"/><path d="M1029.5 716l2 2M1038 716l-2 2M1029.5 722l2-2M1038 722l-2-2" stroke="#444" stroke-width="1"/><circle cx="1033.8" cy="719" r="1.4" fill="#3cc"/><path d="M1068 719h6" stroke="#f0f0f0" stroke-width="1.4"/><rect x="1078" y="717.3" width="81" height="3.6" fill="#f0f0f0"/><rect x="1116.8" y="714.2" width="3.4" height="10" fill="#f0f0f0" stroke="#555" stroke-width="0.7"/><path d="M1163 719h7M1166.5 715.5v7" stroke="#f0f0f0" stroke-width="1.4"/><circle cx="1190" cy="717" r="3" fill="#888"/><path d="M1186.5 724l2-3M1193.5 724l-2-3" stroke="#888" stroke-width="1.4"/></svg>
<div class="r" style="left:0;top:727px;width:1200px;height:25px;background:linear-gradient(90deg,#1f3438 0%,#1f3339 38%,#1c2b3f 65%,#1a2443 92%,#1a2645 100%);"></div>
<div class="r" style="left:0px;top:727px;width:24px;height:25px;background:#21363e;"></div>
<div class="r" style="left:24px;top:727px;width:216px;height:25px;background:#f0f0f0;"></div>
<div class="t" style="left:49px;top:730.44px;font-weight:normal;font-size:9.4px;color:#333;">Suchbegriff hier eingeben</div>
<div class="r" style="left:426.5px;top:727px;width:30.5px;height:25px;background:#3c4b56;"></div>
<div class="r" style="left:426.5px;top:750.5px;width:30.5px;height:1.5px;background:#8cc8f0;"></div>
<div class="t" style="left:946px;width:400px;text-align:center;top:724.13px;font-weight:normal;font-size:7.2px;color:#f0f0f0;-webkit-text-stroke:0.12px #f0f0f0;">15:14</div>
<div class="t" style="left:946px;width:400px;text-align:center;top:735.33px;font-weight:normal;font-size:7.2px;color:#f0f0f0;-webkit-text-stroke:0.12px #f0f0f0;">06.01.2022</div>
<svg class="r" style="left:0px;top:0px;" width="1200" height="752" viewBox="0 0 1200 752"><path d="M4 735.3l3.8-.5v4.2H4zM8.6 734.7l5.3-.7v5H8.6zM4 739.8h3.8v4.2L4 743.5zM8.6 739.8h5.3v5l-5.3-.7z" fill="#fff"/><circle cx="38" cy="737.8" r="3.2" fill="none" stroke="#333" stroke-width="1"/><path d="M35.8 740l-3.8 3.8" stroke="#333" stroke-width="1.1"/><rect x="251.2" y="736.2" width="5.6" height="6.6" fill="none" stroke="#d8d8d8" stroke-width="0.8"/><path d="M250 734.8h8M250 744.3h8" stroke="#d8d8d8" stroke-width="0.8"/><rect x="258.8" y="736.5" width="1" height="1.8" fill="#d8d8d8"/><rect x="258.8" y="740.5" width="1" height="1.8" fill="#d8d8d8"/><path d="M293.5 741.5q-1.5 4-6.5 4q-6 0-6-6q0-6.5 6.5-6.5q6 0 6 6v1.2h-8.5q.5 3 3.5 3q2.5 0 4-1.5z M285 738.2h5q-.3-2.5-2.5-2.5q-2.2 0-2.5 2.5z" fill="#1f8ae0" fill-rule="evenodd"/><path d="M311 734h5l1.5 1.5h7.5v10.5h-14z" fill="#f3c34a"/><rect x="311" y="737.5" width="14" height="8.5" fill="#fbd35e"/><rect x="314.5" y="741" width="7" height="2" fill="#2a86d6"/><path d="M345.5 735.5v-1.5a3.5 3.5 0 0 1 7 0v1.5" fill="none" stroke="#2a86d6" stroke-width="1"/><rect x="341.5" y="735.5" width="15" height="11" rx="1.2" fill="#f4f4f4"/><rect x="346.5" y="738" width="2.4" height="2.4" fill="#f25022"/><rect x="349.3" y="738" width="2.4" height="2.4" fill="#7fba00"/><rect x="346.5" y="740.8" width="2.4" height="2.4" fill="#00a4ef"/><rect x="349.3" y="740.8" width="2.4" height="2.4" fill="#ffb900"/><rect x="372" y="735.5" width="15.5" height="10" fill="#1e8ad6"/><path d="M372 735.5l7.75 6 7.75-6" fill="#fff" stroke="#fff" stroke-width="0.6"/><path d="M372 735.5l7.75-3.5 7.75 3.5z" fill="#0f6cbd"/><path d="M372 745.5l7.75-5 7.75 5z" fill="#3aa0ec"/><defs><radialGradient id="ff" cx="0.6" cy="0.3" r="0.8"><stop offset="0" stop-color="#ffd54a"/><stop offset="0.45" stop-color="#ff8a2a"/><stop offset="1" stop-color="#e8384f"/></radialGradient></defs><circle cx="410.5" cy="740.3" r="7.2" fill="url(#ff)"/><circle cx="409.8" cy="741.2" r="3.6" fill="#8a3fd0"/><path d="M403.5 738q1.5-4 5-5.5q-1 2 0 3.5q2.5-.5 4.5 1.5q-1-3-3.5-5q5 1 6.5 5.5q-2-2-4-1.5q2 2 1 4.5" fill="#ff9a2a"/><rect x="433" y="731.5" width="16.5" height="16.5" fill="#8dbb2b"/><path d="M436.5 734l9.5 11.5M446 734l-9.5 11.5" stroke="#fff" stroke-width="2.2"/><path d="M434 739.7h14.5" stroke="#8dbb2b" stroke-width="1.2"/><path d="M1083.5 741.5l3.7-3.7 3.7 3.7" fill="none" stroke="#e6e6e6" stroke-width="1"/><rect x="1099" y="735.5" width="9.5" height="6.5" fill="none" stroke="#e6e6e6" stroke-width="0.9"/><path d="M1101 744.3h5.5M1103.8 742v2.3" stroke="#e6e6e6" stroke-width="0.9"/><rect x="1097" y="735" width="2.5" height="4" fill="#1b2a45" stroke="#e6e6e6" stroke-width="0.7"/><path d="M1112.5 738h2l3-2.5v9l-3-2.5h-2z" fill="none" stroke="#e6e6e6" stroke-width="0.9"/><path d="M1119 738q1 2 0 4M1120.8 736.5q2 3.5 0 7M1122.6 735q3 5 0 10" fill="none" stroke="#e6e6e6" stroke-width="0.8"/><path d="M1174.5 734h11v8h-6l-3 3v-3h-2z" fill="#f0f0f0"/><path d="M1176.5 736.5h7M1176.5 738.5h7M1176.5 740.5h5" stroke="#1b2a45" stroke-width="0.6"/><circle cx="1184" cy="744" r="4.2" fill="#2b2b2b" stroke="#555" stroke-width="0.6"/><text x="1182.6" y="746.6" font-family="Liberation Sans" font-size="6.5" fill="#fff">1</text><rect x="1196.8" y="727" width="0.8" height="25" fill="#5a6a85"/></svg>
</body></html>
